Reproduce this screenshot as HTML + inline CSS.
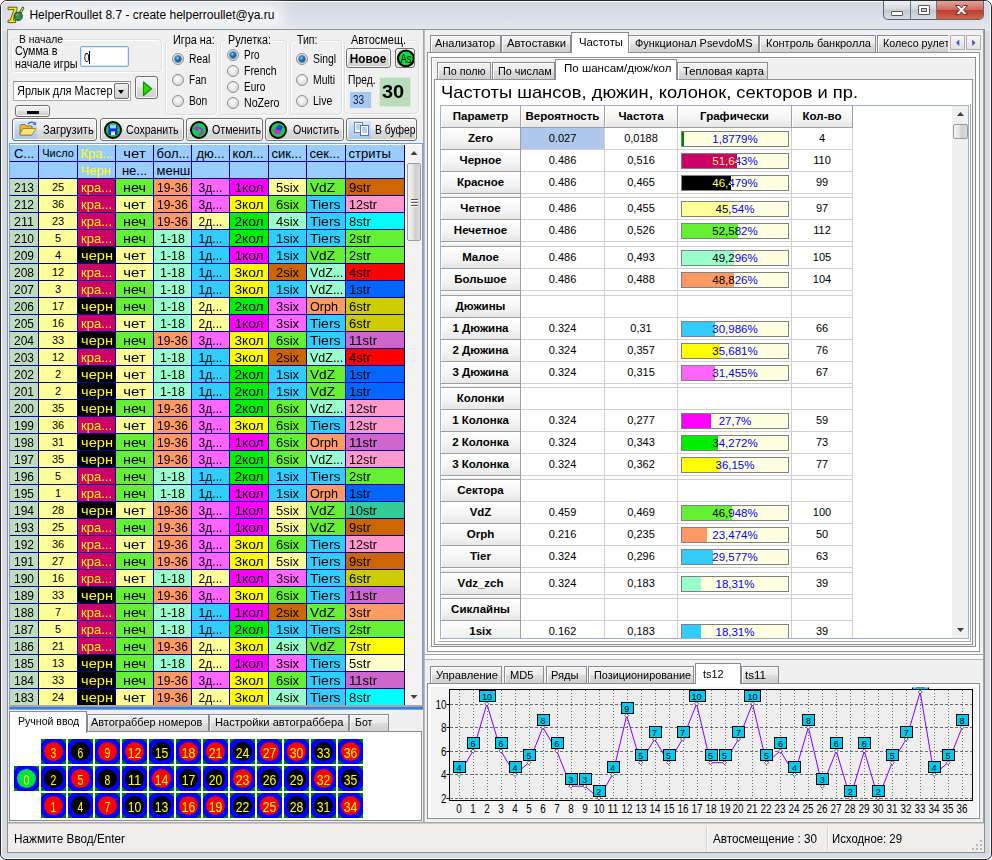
<!DOCTYPE html>
<html lang="ru"><head><meta charset="utf-8"><title>HelperRoullet 8.7</title>
<style>
html,body{margin:0;padding:0;background:#fff}
body{width:992px;height:860px;position:relative;overflow:hidden;font-family:"Liberation Sans",sans-serif;font-size:12px;color:#000}
div{position:absolute}
.t{position:absolute;white-space:nowrap;display:block}

#win{position:absolute;left:0;top:0;width:990px;height:858px;border:1px solid #2b2b2b;border-radius:7px 7px 6px 6px;
background:linear-gradient(#d4d9e3 0px,#d8dde6 14px,#e2e6ec 26px,#e9ecf1 29px,#d6dbe5 31px,#d5dae4 100%);}
#winhi{position:absolute;left:1px;top:1px;width:988px;height:856px;border:1px solid rgba(255,255,255,.85);border-radius:6px;}
#glow{position:absolute;left:14px;top:5px;width:270px;height:20px;background:#fff;opacity:.8;filter:blur(7px);border-radius:10px}
#client{position:absolute;left:8px;top:30px;width:976px;height:822px;background:#f0f0f0;box-shadow:0 0 0 1px #8b9097;}
#capbtns{position:absolute;left:883px;top:1px;width:101px;height:19px;border:1px solid #5d6670;border-top:none;border-radius:0 0 5px 5px;box-sizing:border-box;overflow:hidden;background:linear-gradient(#eef1f4,#d4d9df 45%,#c3c9d1 50%,#d9dde2);}
.cb{position:absolute;top:0;height:19px;border-right:1px solid #6d7680;box-sizing:border-box}
.cb i{position:absolute;border:1px solid #555;background:#fff;box-sizing:border-box;border-radius:1px}
.cb b{position:absolute;border:1px solid #555;background:#ccd;box-sizing:content-box}
.cb.close{border-right:none;background:linear-gradient(#e0a49a,#cf6a5c 45%,#c03c2c 50%,#cf6a52);}

.gb{border:1px solid #dce0e5;border-radius:4px;box-sizing:border-box;box-shadow:inset 1px 1px 0 #fff, 1px 1px 0 #fff}
.rad{position:absolute;width:12px;height:12px;border-radius:50%;border:1px solid #8e8f8f;box-sizing:border-box;background:radial-gradient(circle at 45% 40%,#fdfdfd 0,#e4e4e4 55%,#c9c9c9 100%)}
.rad i{position:absolute;left:2px;top:2px;width:6px;height:6px;border-radius:50%;background:radial-gradient(circle at 40% 35%,#8fd8f8 0,#1a6fb4 40%,#083a78 100%);box-shadow:0 0 0 0.7px #2a6aa8}
.btn{border:1px solid #707070;border-radius:3px;box-sizing:border-box;background:linear-gradient(#f2f2f2 0,#ebebeb 48%,#dddddd 52%,#cfcfcf 100%);box-shadow:inset 0 0 0 1px rgba(255,255,255,.8);overflow:hidden}
.edit{border:1px solid #7aaede;box-sizing:border-box;background:#fff;border-radius:2px;box-shadow:inset 0 0 0 1px #dbeaf8}
.combo{border:1px solid #abadb3;box-sizing:border-box;background:#fff;border-top-color:#8a8d94}
.cbtn{position:absolute;right:1px;top:1px;width:15.5px;height:16.5px;border:1px solid #707070;box-sizing:border-box;background:linear-gradient(#f2f2f2,#ddd 50%,#cfcfcf);border-radius:2px}
.cbtn i{position:absolute;left:3px;top:6px;border:3.5px solid transparent;border-top:4px solid #000;border-bottom:none}

#lgrid{position:absolute;background:#fff;overflow:hidden;box-shadow:0 0 0 1px #6f9fe6}
#lgrid .c{position:absolute;height:16px;overflow:hidden}
.vsb{position:absolute;background:#f3f3f3}
.thumb{position:absolute;border:1px solid #9a9a9a;border-radius:2px;box-sizing:border-box;background:linear-gradient(90deg,#f4f4f4,#e2e2e2 45%,#cfcfcf 55%,#dadada)}
.thumb i{position:absolute;left:3px;width:7px;height:1px;background:#555;box-shadow:0 1px 0 #fff}

.page{border:1px solid #898c95;box-sizing:border-box;background:#fff}
.tab{border:1px solid #898c95;border-bottom:none;box-sizing:border-box;background:linear-gradient(#f2f2f2 0,#ebebeb 50%,#dddddd 50%,#cfcfcf 100%);overflow:hidden;box-shadow:inset 1px 1px 0 #fcfcfc}
.tab.sel{background:#fff;box-shadow:none;z-index:2}
.nc{position:absolute;width:25px;height:25px;background:#008000;overflow:hidden}
.nc b{position:absolute;left:-2px;top:-2px;width:29px;height:29px;border-radius:50%;background:#0000ff}
.nc i{position:absolute;left:3px;top:3px;width:19px;height:19px;border-radius:50%}

.page2{border:1px solid #898c95;box-sizing:border-box;background:#fff}
.sbtn{border:1px solid #b0b0b0;box-sizing:border-box;background:linear-gradient(#f6f6f6,#e0e0e0);}
#rgrid{position:absolute;background:#fff;overflow:hidden;border:1px solid #9ab4d4;box-sizing:border-box}
#rgrid .d{position:absolute;box-sizing:border-box;border-right:1px solid #d0d0d0;border-bottom:1px solid #d0d0d0;background:#fff}
#rgrid .h{position:absolute;box-sizing:border-box;border-right:1px solid #a0a0a0;border-bottom:1px solid #a0a0a0;background:linear-gradient(#ffffff,#f4f4f4 60%,#e6e6e6);box-shadow:inset 1px 1px 0 #fff}
.bar{position:absolute;box-sizing:border-box;border:1px solid #808080;background:#ffffe1;overflow:hidden}
.bar .fill{position:absolute;left:0;top:0;height:14px;overflow:hidden}
.bt{left:0;top:1px;width:106px;text-align:center;font-size:11.5px;line-height:12px}
</style></head>
<body>
<div id="win"></div>
<div id="winhi"></div>
<div id="glow"></div>
<svg style="position:absolute;left:0px;top:0px" width="30" height="30" viewBox="0 0 30 30">
<path d="M8 7.2 H17 V9.6 L13.2 20.2 H15.6 V22.6 H8 V20.2 H10.2 L14 9.6 H8 Z" fill="#f2ea12" stroke="#5e5208" stroke-width="0.9" stroke-linejoin="round"/>
<circle cx="18.2" cy="16.3" r="4.1" fill="#2f9636" stroke="#1c2c50" stroke-width="0.9"/>
<path d="M14.6 17.6 A4 4 0 0 0 21.8 18.2 L20 19.8 L16.4 19.8 Z" fill="#2450a8"/>
<circle cx="17.2" cy="15" r="1.3" fill="#8a8aa0"/>
<path d="M19.4 12.4 L22.6 6.8 L24 8 L21.4 12.8 Z" fill="#f4ee10" stroke="#222" stroke-width="0.8" stroke-linejoin="round"/>
</svg>
<span class="t" style="left:29.4px;top:8.84px;font-size:12px;line-height:12px;transform:scaleX(1.000);transform-origin:0 0;color:#000;">HelperRoullet 8.7 - create helperroullet@ya.ru</span>
<div id="capbtns"><div class="cb" style="left:0;width:27px"><i style="left:7px;top:9.5px;width:12px;height:5px"></i></div><div class="cb" style="left:27px;width:26px"><i style="left:7px;top:4px;width:12px;height:10px"></i><b style="left:10px;top:7px;width:4px;height:2px"></b></div><div class="cb close" style="left:53px;width:48px"><svg width="48" height="19" style="position:absolute;left:0;top:0"><path d="M18.5 4.5 L22.3 4.5 L24.5 7 L26.7 4.5 L30.5 4.5 L26.5 8.9 L30.5 13.4 L26.7 13.4 L24.5 10.9 L22.3 13.4 L18.5 13.4 L22.5 8.9 Z" fill="#fff" stroke="#5a2222" stroke-width="0.9"/></svg></div></div>
<div id="client"></div>
<div class="gb" style="left:11px;top:39px;width:151px;height:32.5px;"></div>
<div style="left:17px;top:38px;width:48px;height:4px;background:#f0f0f0"></div>
<span class="t" style="left:18.75px;top:33.69px;font-size:11px;line-height:11px;transform:scaleX(0.941);transform-origin:0 0;">В начале</span>
<span class="t" style="left:14.5px;top:44.84px;font-size:12px;line-height:12px;transform:scaleX(0.896);transform-origin:0 0;">Сумма в</span>
<span class="t" style="left:14.5px;top:57.59px;font-size:12px;line-height:12px;transform:scaleX(0.901);transform-origin:0 0;">начале игры</span>
<div class="edit" style="left:80px;top:46px;width:49px;height:20.5px;"><span class="t" style="left:2.5px;top:5.09px;font-size:12px;line-height:12px;transform:scaleX(0.822);transform-origin:0 0;">0</span><i style="position:absolute;left:8px;top:4px;width:1px;height:13px;background:#000"></i></div>
<div class="combo" style="left:13px;top:80.5px;width:118px;height:20.5px;"><span class="t" style="left:3px;top:3.34px;font-size:12px;line-height:12px;transform:scaleX(0.914);transform-origin:0 0;">Ярлык для Мастер</span><div class="cbtn"><i></i></div></div>
<div class="btn" style="left:135px;top:76px;width:23px;height:23px;"><svg width="21" height="21" style="position:absolute;left:0;top:0"><path d="M7.5 5 L15.5 11.7 L7.5 18.5 Z" fill="#22e000" stroke="#1b8a00" stroke-width="1.2" stroke-linejoin="round"/></svg></div>
<div class="btn" style="left:15px;top:104.5px;width:35px;height:12.5px;"><i style="position:absolute;left:11px;top:5.5px;width:12px;height:3px;background:#000"></i></div>
<div class="gb" style="left:165px;top:40px;width:52px;height:75px;"></div>
<div style="left:170px;top:39px;width:46px;height:4px;background:#f0f0f0"></div>
<span class="t" style="left:172.5px;top:34.34px;font-size:12px;line-height:12px;transform:scaleX(0.901);transform-origin:0 0;">Игра на:</span>
<div class="rad" style="left:172px;top:53px"><i></i></div>
<span class="t" style="left:188.75px;top:53.09px;font-size:12px;line-height:12px;transform:scaleX(0.861);transform-origin:0 0;">Real</span>
<div class="rad" style="left:172px;top:74px"></div>
<span class="t" style="left:188.75px;top:74.09px;font-size:12px;line-height:12px;transform:scaleX(0.846);transform-origin:0 0;">Fan</span>
<div class="rad" style="left:172px;top:95px"></div>
<span class="t" style="left:188.75px;top:95.09px;font-size:12px;line-height:12px;transform:scaleX(0.854);transform-origin:0 0;">Bon</span>
<div class="gb" style="left:220px;top:40px;width:67px;height:75px;"></div>
<div style="left:225px;top:39px;width:48px;height:4px;background:#f0f0f0"></div>
<span class="t" style="left:227.5px;top:34.34px;font-size:12px;line-height:12px;transform:scaleX(0.895);transform-origin:0 0;">Рулетка:</span>
<div class="rad" style="left:227px;top:49px"><i></i></div>
<span class="t" style="left:243.75px;top:49.09px;font-size:12px;line-height:12px;transform:scaleX(0.829);transform-origin:0 0;">Pro</span>
<div class="rad" style="left:227px;top:65px"></div>
<span class="t" style="left:243.75px;top:65.09px;font-size:12px;line-height:12px;transform:scaleX(0.870);transform-origin:0 0;">French</span>
<div class="rad" style="left:227px;top:81px"></div>
<span class="t" style="left:243.75px;top:81.09px;font-size:12px;line-height:12px;transform:scaleX(0.838);transform-origin:0 0;">Euro</span>
<div class="rad" style="left:227px;top:97px"></div>
<span class="t" style="left:243.75px;top:97.09px;font-size:12px;line-height:12px;transform:scaleX(0.887);transform-origin:0 0;">NoZero</span>
<div class="gb" style="left:290px;top:40px;width:52px;height:75px;"></div>
<div style="left:295px;top:39px;width:25px;height:4px;background:#f0f0f0"></div>
<span class="t" style="left:297px;top:34.34px;font-size:12px;line-height:12px;transform:scaleX(0.878);transform-origin:0 0;">Тип:</span>
<div class="rad" style="left:296px;top:53px"><i></i></div>
<span class="t" style="left:312.5px;top:53.09px;font-size:12px;line-height:12px;transform:scaleX(0.862);transform-origin:0 0;">Singl</span>
<div class="rad" style="left:296px;top:74px"></div>
<span class="t" style="left:312.5px;top:74.09px;font-size:12px;line-height:12px;transform:scaleX(0.868);transform-origin:0 0;">Multi</span>
<div class="rad" style="left:296px;top:95px"></div>
<span class="t" style="left:312.5px;top:95.09px;font-size:12px;line-height:12px;transform:scaleX(0.874);transform-origin:0 0;">Live</span>
<div class="gb" style="left:344px;top:40px;width:75px;height:74px;"></div>
<div style="left:349px;top:39px;width:60px;height:4px;background:#f0f0f0"></div>
<span class="t" style="left:351.25px;top:34.34px;font-size:12px;line-height:12px;transform:scaleX(0.912);transform-origin:0 0;">Автосмещ.</span>
<div class="btn" style="left:346px;top:47.5px;width:44.5px;height:20px;"><span class="t" style="left:0px;width:42px;text-align:center;top:4.34px;font-size:12px;line-height:12px;transform:scaleX(0.981);transform-origin:50% 0;font-weight:bold">Новое</span></div>
<div class="btn" style="left:395px;top:47.5px;width:20px;height:20px;"><svg width="19" height="19" style="position:absolute;left:0;top:0"><circle cx="9.9" cy="9.4" r="7.9" fill="#00e040" stroke="#000" stroke-width="2.2"/><text x="9.9" y="13.7" font-size="12" text-anchor="middle" font-family="Liberation Sans, sans-serif" fill="#000" textLength="11" lengthAdjust="spacingAndGlyphs">As</text></svg></div>
<span class="t" style="left:347.5px;top:73.84px;font-size:12px;line-height:12px;transform:scaleX(0.858);transform-origin:0 0;">Пред.</span>
<div style="left:349px;top:91px;width:23px;height:18px;background:#a9c8f0;border:1px solid #e8eef8;box-sizing:border-box"><span class="t" style="left:2.5px;top:2.34px;font-size:12px;line-height:12px;transform:scaleX(0.842);transform-origin:0 0;color:#124">33</span></div>
<div style="left:379px;top:77px;width:32px;height:30px;background:#b9dcb9;border:1px solid #dfeadf;box-sizing:border-box"><span class="t" style="left:-3.5px;width:32px;text-align:center;top:4.42px;font-size:19px;line-height:19px;transform:scaleX(1.050);transform-origin:50% 0;font-weight:bold">30</span></div>
<div class="btn" style="left:12px;top:118px;width:85px;height:22.5px;"><i style="position:absolute;left:2px;top:1.5px;width:22px;height:18px;background:linear-gradient(#d8e6fa,#a9c6f0);"></i><svg width="22" height="17" style="position:absolute;left:5px;top:1px"><path d="M2 6 L2 15 L14 15 L14 6 L8 6 L7 4.5 L3 4.5 Z" fill="#e8b830" stroke="#8a6a10" stroke-width="0.8"/><path d="M1.5 15 L5 8.5 L18 8.5 L14 15 Z" fill="#ffe27a" stroke="#9a7a18" stroke-width="0.8"/><path d="M10 4 C12 1.5 15 1.5 17 4" fill="none" stroke="#3a6ac8" stroke-width="1.3"/><path d="M15 4.8 L18.2 5 L17.6 1.8 Z" fill="#3a6ac8"/></svg><span class="t" style="left:30px;top:4.59px;font-size:12px;line-height:12px;transform:scaleX(0.926);transform-origin:0 0;">Загрузить</span></div>
<div class="btn" style="left:99.5px;top:118px;width:84px;height:22.5px;"><svg width="20" height="20" style="position:absolute;left:2px;top:0.5px"><circle cx="10" cy="10" r="8" fill="#00d848" stroke="#000" stroke-width="2"/><rect x="5.5" y="5" width="9" height="10" fill="#1030e0"/><rect x="7" y="5" width="6" height="3.4" fill="#a8c8ff"/><rect x="8" y="11.5" width="4" height="3.5" fill="#e8f0ff"/></svg><span class="t" style="left:25.25px;top:4.59px;font-size:12px;line-height:12px;transform:scaleX(0.880);transform-origin:0 0;">Сохранить</span></div>
<div class="btn" style="left:185.5px;top:118px;width:77.5px;height:22.5px;"><svg width="20" height="20" style="position:absolute;left:2px;top:0.5px"><circle cx="10" cy="10" r="8" fill="#00d848" stroke="#000" stroke-width="2"/><path d="M8 8 L10.5 8 C14.5 8 14.5 14.5 9.5 14.8" fill="none" stroke="#b030d0" stroke-width="2.2"/><path d="M4.2 8.6 L9 4.8 L9 11.6 Z" fill="#b030d0"/></svg><span class="t" style="left:25.75px;top:4.59px;font-size:12px;line-height:12px;transform:scaleX(0.893);transform-origin:0 0;">Отменить</span></div>
<div class="btn" style="left:265px;top:118px;width:78.5px;height:22.5px;"><svg width="20" height="20" style="position:absolute;left:2px;top:0.5px"><circle cx="10" cy="10" r="8" fill="#00d848" stroke="#000" stroke-width="2"/><path d="M11.2 4.2 L14.8 6.8 L12.8 11.2 L7.2 8.8 Z" fill="#2040e0"/><path d="M5.2 10.2 L7.2 8.6 L12.8 11.2 L11 15.2 L9 13.6 L7.4 14.8 Z" fill="#f020c0"/></svg><span class="t" style="left:26.5px;top:4.59px;font-size:12px;line-height:12px;transform:scaleX(0.885);transform-origin:0 0;">Очистить</span></div>
<div class="btn" style="left:346px;top:118px;width:71px;height:22.5px;"><i style="position:absolute;left:2px;top:1.5px;width:22px;height:18px;background:linear-gradient(#d8e6fa,#a9c6f0);"></i><svg width="20" height="17" style="position:absolute;left:5px;top:1px"><rect x="2.5" y="2.5" width="8" height="10" fill="#fff" stroke="#5a7ab8" stroke-width="0.9"/><path d="M4 5 H9 M4 7 H9 M4 9 H9" stroke="#6a8ad0" stroke-width="0.8"/><rect x="8.5" y="5.5" width="8" height="10" fill="#fff" stroke="#4a6ab0" stroke-width="0.9"/><path d="M10 8 H15 M10 10 H15 M10 12 H15" stroke="#5a7ac8" stroke-width="0.8"/></svg><span class="t" style="left:27.5px;top:4.59px;font-size:12px;line-height:12px;transform:scaleX(0.861);transform-origin:0 0;">В буфер</span></div>
<div id="lgrid" style="left:10px;top:144px;width:412px;height:561px">
<div style="position:absolute;left:0;top:1px;width:395px;height:560px;background:#000099"></div>
<div class="c" style="left:0px;top:1px;width:28px;background:#99ccff"><span class="t" style="left:0px;width:28px;text-align:center;top:1.50px;font-size:13px;line-height:13px;color:#000">С...</span></div><div class="c" style="left:29px;top:1px;width:38px;background:#99ccff"><span class="t" style="left:0px;width:38px;text-align:center;top:2.69px;font-size:11px;line-height:11px;color:#000">Число</span></div><div class="c" style="left:68px;top:1px;width:37px;background:#99ccff"><span class="t" style="left:2.5px;top:1.50px;font-size:13px;line-height:13px;color:#ffff00">Кра...</span></div><div class="c" style="left:106px;top:1px;width:37px;background:#99ccff"><span class="t" style="left:0px;width:37px;text-align:center;top:1.50px;font-size:13px;line-height:13px;transform:scaleX(1.152);transform-origin:50% 0;color:#000">чет</span></div><div class="c" style="left:144px;top:1px;width:37px;background:#99ccff"><span class="t" style="left:2.5px;top:1.50px;font-size:13px;line-height:13px;color:#000">бол...</span></div><div class="c" style="left:182px;top:1px;width:37px;background:#99ccff"><span class="t" style="left:0px;width:37px;text-align:center;top:1.50px;font-size:13px;line-height:13px;color:#000">дю...</span></div><div class="c" style="left:220px;top:1px;width:38px;background:#99ccff"><span class="t" style="left:2.5px;top:1.50px;font-size:13px;line-height:13px;color:#000">кол...</span></div><div class="c" style="left:259px;top:1px;width:37px;background:#99ccff"><span class="t" style="left:2.5px;top:1.50px;font-size:13px;line-height:13px;color:#000">сик...</span></div><div class="c" style="left:297px;top:1px;width:38px;background:#99ccff"><span class="t" style="left:2.5px;top:1.50px;font-size:13px;line-height:13px;color:#000">сек...</span></div><div class="c" style="left:336px;top:1px;width:58px;background:#99ccff"><span class="t" style="left:2.5px;top:1.50px;font-size:13px;line-height:13px;color:#000">стриты</span></div>
<div class="c" style="left:0px;top:18px;width:28px;background:#99ccff"><span class="t" style="left:2.5px;top:1.50px;font-size:13px;line-height:13px;color:#000"></span></div><div class="c" style="left:29px;top:18px;width:38px;background:#99ccff"><span class="t" style="left:2.5px;top:1.50px;font-size:13px;line-height:13px;color:#000"></span></div><div class="c" style="left:68px;top:18px;width:37px;background:#99ccff"><span class="t" style="left:2.5px;top:1.50px;font-size:13px;line-height:13px;color:#ffff00">Черн</span></div><div class="c" style="left:106px;top:18px;width:37px;background:#99ccff"><span class="t" style="left:0px;width:37px;text-align:center;top:1.50px;font-size:13px;line-height:13px;color:#000">не...</span></div><div class="c" style="left:144px;top:18px;width:37px;background:#99ccff"><span class="t" style="left:2.5px;top:1.50px;font-size:13px;line-height:13px;color:#000">менш</span></div><div class="c" style="left:182px;top:18px;width:37px;background:#99ccff"><span class="t" style="left:2.5px;top:1.50px;font-size:13px;line-height:13px;color:#000"></span></div><div class="c" style="left:220px;top:18px;width:38px;background:#99ccff"><span class="t" style="left:2.5px;top:1.50px;font-size:13px;line-height:13px;color:#000"></span></div><div class="c" style="left:259px;top:18px;width:37px;background:#99ccff"><span class="t" style="left:2.5px;top:1.50px;font-size:13px;line-height:13px;color:#000"></span></div><div class="c" style="left:297px;top:18px;width:38px;background:#99ccff"><span class="t" style="left:2.5px;top:1.50px;font-size:13px;line-height:13px;color:#000"></span></div><div class="c" style="left:336px;top:18px;width:58px;background:#99ccff"><span class="t" style="left:2.5px;top:1.50px;font-size:13px;line-height:13px;color:#000"></span></div>
<div class="c" style="left:0px;top:35px;width:28px;background:#c0dcc0"><span class="t" style="left:0px;width:28px;text-align:center;top:1.50px;font-size:13px;line-height:13px;transform:scaleX(0.922);transform-origin:50% 0;color:#000">213</span></div><div class="c" style="left:29px;top:35px;width:38px;background:#ffff99"><span class="t" style="left:0px;width:38px;text-align:center;top:2.69px;font-size:11px;line-height:11px;color:#000">25</span></div><div class="c" style="left:68px;top:35px;width:37px;background:#cc0066"><span class="t" style="left:2.5px;top:1.50px;font-size:13px;line-height:13px;transform:scaleX(1.001);transform-origin:0 0;color:#ffff00">кра...</span></div><div class="c" style="left:106px;top:35px;width:37px;background:#66f033"><span class="t" style="left:0px;width:37px;text-align:center;top:1.50px;font-size:13px;line-height:13px;transform:scaleX(1.108);transform-origin:50% 0;color:#000">неч</span></div><div class="c" style="left:144px;top:35px;width:37px;background:#ff9966"><span class="t" style="left:0px;width:37px;text-align:center;top:1.50px;font-size:13px;line-height:13px;transform:scaleX(0.925);transform-origin:50% 0;color:#000">19-36</span></div><div class="c" style="left:182px;top:35px;width:37px;background:#ff66ff"><span class="t" style="left:0px;width:37px;text-align:center;top:1.50px;font-size:13px;line-height:13px;transform:scaleX(0.926);transform-origin:50% 0;color:#000">3д...</span></div><div class="c" style="left:220px;top:35px;width:38px;background:#ff00ff"><span class="t" style="left:0px;width:38px;text-align:center;top:1.50px;font-size:13px;line-height:13px;transform:scaleX(1.060);transform-origin:50% 0;color:#000">1кол</span></div><div class="c" style="left:259px;top:35px;width:37px;background:#ffff99"><span class="t" style="left:0px;width:37px;text-align:center;top:1.50px;font-size:13px;line-height:13px;transform:scaleX(0.995);transform-origin:50% 0;color:#000">5six</span></div><div class="c" style="left:297px;top:35px;width:38px;background:#66f033"><span class="t" style="left:2.5px;top:1.50px;font-size:13px;line-height:13px;transform:scaleX(1.048);transform-origin:0 0;color:#000">VdZ</span></div><div class="c" style="left:336px;top:35px;width:58px;background:#cc6600"><span class="t" style="left:2.5px;top:1.50px;font-size:13px;line-height:13px;transform:scaleX(1.004);transform-origin:0 0;color:#000">9str</span></div>
<div class="c" style="left:0px;top:52px;width:28px;background:#c0dcc0"><span class="t" style="left:0px;width:28px;text-align:center;top:1.50px;font-size:13px;line-height:13px;transform:scaleX(0.922);transform-origin:50% 0;color:#000">212</span></div><div class="c" style="left:29px;top:52px;width:38px;background:#ffff99"><span class="t" style="left:0px;width:38px;text-align:center;top:2.69px;font-size:11px;line-height:11px;color:#000">36</span></div><div class="c" style="left:68px;top:52px;width:37px;background:#cc0066"><span class="t" style="left:2.5px;top:1.50px;font-size:13px;line-height:13px;transform:scaleX(1.001);transform-origin:0 0;color:#ffff00">кра...</span></div><div class="c" style="left:106px;top:52px;width:37px;background:#ffff99"><span class="t" style="left:0px;width:37px;text-align:center;top:1.50px;font-size:13px;line-height:13px;transform:scaleX(1.152);transform-origin:50% 0;color:#000">чет</span></div><div class="c" style="left:144px;top:52px;width:37px;background:#ff9966"><span class="t" style="left:0px;width:37px;text-align:center;top:1.50px;font-size:13px;line-height:13px;transform:scaleX(0.925);transform-origin:50% 0;color:#000">19-36</span></div><div class="c" style="left:182px;top:52px;width:37px;background:#ff66ff"><span class="t" style="left:0px;width:37px;text-align:center;top:1.50px;font-size:13px;line-height:13px;transform:scaleX(0.926);transform-origin:50% 0;color:#000">3д...</span></div><div class="c" style="left:220px;top:52px;width:38px;background:#ffff00"><span class="t" style="left:0px;width:38px;text-align:center;top:1.50px;font-size:13px;line-height:13px;transform:scaleX(1.060);transform-origin:50% 0;color:#000">3кол</span></div><div class="c" style="left:259px;top:52px;width:37px;background:#66f033"><span class="t" style="left:0px;width:37px;text-align:center;top:1.50px;font-size:13px;line-height:13px;transform:scaleX(0.995);transform-origin:50% 0;color:#000">6six</span></div><div class="c" style="left:297px;top:52px;width:38px;background:#33ccff"><span class="t" style="left:2.5px;top:1.50px;font-size:13px;line-height:13px;transform:scaleX(1.074);transform-origin:0 0;color:#000">Tiers</span></div><div class="c" style="left:336px;top:52px;width:58px;background:#ff99cc"><span class="t" style="left:2.5px;top:1.50px;font-size:13px;line-height:13px;transform:scaleX(0.969);transform-origin:0 0;color:#000">12str</span></div>
<div class="c" style="left:0px;top:69px;width:28px;background:#c0dcc0"><span class="t" style="left:0px;width:28px;text-align:center;top:1.50px;font-size:13px;line-height:13px;transform:scaleX(0.965);transform-origin:50% 0;color:#000">211</span></div><div class="c" style="left:29px;top:69px;width:38px;background:#ffff99"><span class="t" style="left:0px;width:38px;text-align:center;top:2.69px;font-size:11px;line-height:11px;color:#000">23</span></div><div class="c" style="left:68px;top:69px;width:37px;background:#cc0066"><span class="t" style="left:2.5px;top:1.50px;font-size:13px;line-height:13px;transform:scaleX(1.001);transform-origin:0 0;color:#ffff00">кра...</span></div><div class="c" style="left:106px;top:69px;width:37px;background:#66f033"><span class="t" style="left:0px;width:37px;text-align:center;top:1.50px;font-size:13px;line-height:13px;transform:scaleX(1.108);transform-origin:50% 0;color:#000">неч</span></div><div class="c" style="left:144px;top:69px;width:37px;background:#ff9966"><span class="t" style="left:0px;width:37px;text-align:center;top:1.50px;font-size:13px;line-height:13px;transform:scaleX(0.925);transform-origin:50% 0;color:#000">19-36</span></div><div class="c" style="left:182px;top:69px;width:37px;background:#ffff99"><span class="t" style="left:0px;width:37px;text-align:center;top:1.50px;font-size:13px;line-height:13px;transform:scaleX(0.926);transform-origin:50% 0;color:#000">2д...</span></div><div class="c" style="left:220px;top:69px;width:38px;background:#00ee00"><span class="t" style="left:0px;width:38px;text-align:center;top:1.50px;font-size:13px;line-height:13px;transform:scaleX(1.060);transform-origin:50% 0;color:#000">2кол</span></div><div class="c" style="left:259px;top:69px;width:37px;background:#99ffcc"><span class="t" style="left:0px;width:37px;text-align:center;top:1.50px;font-size:13px;line-height:13px;transform:scaleX(0.995);transform-origin:50% 0;color:#000">4six</span></div><div class="c" style="left:297px;top:69px;width:38px;background:#33ccff"><span class="t" style="left:2.5px;top:1.50px;font-size:13px;line-height:13px;transform:scaleX(1.074);transform-origin:0 0;color:#000">Tiers</span></div><div class="c" style="left:336px;top:69px;width:58px;background:#00ffff"><span class="t" style="left:2.5px;top:1.50px;font-size:13px;line-height:13px;transform:scaleX(1.004);transform-origin:0 0;color:#000">8str</span></div>
<div class="c" style="left:0px;top:86px;width:28px;background:#c0dcc0"><span class="t" style="left:0px;width:28px;text-align:center;top:1.50px;font-size:13px;line-height:13px;transform:scaleX(0.922);transform-origin:50% 0;color:#000">210</span></div><div class="c" style="left:29px;top:86px;width:38px;background:#ffff99"><span class="t" style="left:0px;width:38px;text-align:center;top:2.69px;font-size:11px;line-height:11px;color:#000">5</span></div><div class="c" style="left:68px;top:86px;width:37px;background:#cc0066"><span class="t" style="left:2.5px;top:1.50px;font-size:13px;line-height:13px;transform:scaleX(1.001);transform-origin:0 0;color:#ffff00">кра...</span></div><div class="c" style="left:106px;top:86px;width:37px;background:#66f033"><span class="t" style="left:0px;width:37px;text-align:center;top:1.50px;font-size:13px;line-height:13px;transform:scaleX(1.108);transform-origin:50% 0;color:#000">неч</span></div><div class="c" style="left:144px;top:86px;width:37px;background:#99ffcc"><span class="t" style="left:0px;width:37px;text-align:center;top:1.50px;font-size:13px;line-height:13px;transform:scaleX(0.960);transform-origin:50% 0;color:#000">1-18</span></div><div class="c" style="left:182px;top:86px;width:37px;background:#33ccff"><span class="t" style="left:0px;width:37px;text-align:center;top:1.50px;font-size:13px;line-height:13px;transform:scaleX(0.926);transform-origin:50% 0;color:#000">1д...</span></div><div class="c" style="left:220px;top:86px;width:38px;background:#00ee00"><span class="t" style="left:0px;width:38px;text-align:center;top:1.50px;font-size:13px;line-height:13px;transform:scaleX(1.060);transform-origin:50% 0;color:#000">2кол</span></div><div class="c" style="left:259px;top:86px;width:37px;background:#33ccff"><span class="t" style="left:0px;width:37px;text-align:center;top:1.50px;font-size:13px;line-height:13px;transform:scaleX(0.995);transform-origin:50% 0;color:#000">1six</span></div><div class="c" style="left:297px;top:86px;width:38px;background:#33ccff"><span class="t" style="left:2.5px;top:1.50px;font-size:13px;line-height:13px;transform:scaleX(1.074);transform-origin:0 0;color:#000">Tiers</span></div><div class="c" style="left:336px;top:86px;width:58px;background:#66f033"><span class="t" style="left:2.5px;top:1.50px;font-size:13px;line-height:13px;transform:scaleX(1.004);transform-origin:0 0;color:#000">2str</span></div>
<div class="c" style="left:0px;top:103px;width:28px;background:#c0dcc0"><span class="t" style="left:0px;width:28px;text-align:center;top:1.50px;font-size:13px;line-height:13px;transform:scaleX(0.922);transform-origin:50% 0;color:#000">209</span></div><div class="c" style="left:29px;top:103px;width:38px;background:#ffff99"><span class="t" style="left:0px;width:38px;text-align:center;top:2.69px;font-size:11px;line-height:11px;color:#000">4</span></div><div class="c" style="left:68px;top:103px;width:37px;background:#000"><span class="t" style="left:2.5px;top:1.50px;font-size:13px;line-height:13px;transform:scaleX(1.126);transform-origin:0 0;color:#ffff00">черн</span></div><div class="c" style="left:106px;top:103px;width:37px;background:#ffff99"><span class="t" style="left:0px;width:37px;text-align:center;top:1.50px;font-size:13px;line-height:13px;transform:scaleX(1.152);transform-origin:50% 0;color:#000">чет</span></div><div class="c" style="left:144px;top:103px;width:37px;background:#99ffcc"><span class="t" style="left:0px;width:37px;text-align:center;top:1.50px;font-size:13px;line-height:13px;transform:scaleX(0.960);transform-origin:50% 0;color:#000">1-18</span></div><div class="c" style="left:182px;top:103px;width:37px;background:#33ccff"><span class="t" style="left:0px;width:37px;text-align:center;top:1.50px;font-size:13px;line-height:13px;transform:scaleX(0.926);transform-origin:50% 0;color:#000">1д...</span></div><div class="c" style="left:220px;top:103px;width:38px;background:#ff00ff"><span class="t" style="left:0px;width:38px;text-align:center;top:1.50px;font-size:13px;line-height:13px;transform:scaleX(1.060);transform-origin:50% 0;color:#000">1кол</span></div><div class="c" style="left:259px;top:103px;width:37px;background:#33ccff"><span class="t" style="left:0px;width:37px;text-align:center;top:1.50px;font-size:13px;line-height:13px;transform:scaleX(0.995);transform-origin:50% 0;color:#000">1six</span></div><div class="c" style="left:297px;top:103px;width:38px;background:#66f033"><span class="t" style="left:2.5px;top:1.50px;font-size:13px;line-height:13px;transform:scaleX(1.048);transform-origin:0 0;color:#000">VdZ</span></div><div class="c" style="left:336px;top:103px;width:58px;background:#66f033"><span class="t" style="left:2.5px;top:1.50px;font-size:13px;line-height:13px;transform:scaleX(1.004);transform-origin:0 0;color:#000">2str</span></div>
<div class="c" style="left:0px;top:120px;width:28px;background:#c0dcc0"><span class="t" style="left:0px;width:28px;text-align:center;top:1.50px;font-size:13px;line-height:13px;transform:scaleX(0.922);transform-origin:50% 0;color:#000">208</span></div><div class="c" style="left:29px;top:120px;width:38px;background:#ffff99"><span class="t" style="left:0px;width:38px;text-align:center;top:2.69px;font-size:11px;line-height:11px;color:#000">12</span></div><div class="c" style="left:68px;top:120px;width:37px;background:#cc0066"><span class="t" style="left:2.5px;top:1.50px;font-size:13px;line-height:13px;transform:scaleX(1.001);transform-origin:0 0;color:#ffff00">кра...</span></div><div class="c" style="left:106px;top:120px;width:37px;background:#ffff99"><span class="t" style="left:0px;width:37px;text-align:center;top:1.50px;font-size:13px;line-height:13px;transform:scaleX(1.152);transform-origin:50% 0;color:#000">чет</span></div><div class="c" style="left:144px;top:120px;width:37px;background:#99ffcc"><span class="t" style="left:0px;width:37px;text-align:center;top:1.50px;font-size:13px;line-height:13px;transform:scaleX(0.960);transform-origin:50% 0;color:#000">1-18</span></div><div class="c" style="left:182px;top:120px;width:37px;background:#33ccff"><span class="t" style="left:0px;width:37px;text-align:center;top:1.50px;font-size:13px;line-height:13px;transform:scaleX(0.926);transform-origin:50% 0;color:#000">1д...</span></div><div class="c" style="left:220px;top:120px;width:38px;background:#ffff00"><span class="t" style="left:0px;width:38px;text-align:center;top:1.50px;font-size:13px;line-height:13px;transform:scaleX(1.060);transform-origin:50% 0;color:#000">3кол</span></div><div class="c" style="left:259px;top:120px;width:37px;background:#cc6600"><span class="t" style="left:0px;width:37px;text-align:center;top:1.50px;font-size:13px;line-height:13px;transform:scaleX(0.995);transform-origin:50% 0;color:#000">2six</span></div><div class="c" style="left:297px;top:120px;width:38px;background:#99ffcc"><span class="t" style="left:2.5px;top:1.50px;font-size:13px;line-height:13px;transform:scaleX(0.960);transform-origin:0 0;color:#000">VdZ...</span></div><div class="c" style="left:336px;top:120px;width:58px;background:#ff0000"><span class="t" style="left:2.5px;top:1.50px;font-size:13px;line-height:13px;transform:scaleX(1.004);transform-origin:0 0;color:#000">4str</span></div>
<div class="c" style="left:0px;top:137px;width:28px;background:#c0dcc0"><span class="t" style="left:0px;width:28px;text-align:center;top:1.50px;font-size:13px;line-height:13px;transform:scaleX(0.922);transform-origin:50% 0;color:#000">207</span></div><div class="c" style="left:29px;top:137px;width:38px;background:#ffff99"><span class="t" style="left:0px;width:38px;text-align:center;top:2.69px;font-size:11px;line-height:11px;color:#000">3</span></div><div class="c" style="left:68px;top:137px;width:37px;background:#cc0066"><span class="t" style="left:2.5px;top:1.50px;font-size:13px;line-height:13px;transform:scaleX(1.001);transform-origin:0 0;color:#ffff00">кра...</span></div><div class="c" style="left:106px;top:137px;width:37px;background:#66f033"><span class="t" style="left:0px;width:37px;text-align:center;top:1.50px;font-size:13px;line-height:13px;transform:scaleX(1.108);transform-origin:50% 0;color:#000">неч</span></div><div class="c" style="left:144px;top:137px;width:37px;background:#99ffcc"><span class="t" style="left:0px;width:37px;text-align:center;top:1.50px;font-size:13px;line-height:13px;transform:scaleX(0.960);transform-origin:50% 0;color:#000">1-18</span></div><div class="c" style="left:182px;top:137px;width:37px;background:#33ccff"><span class="t" style="left:0px;width:37px;text-align:center;top:1.50px;font-size:13px;line-height:13px;transform:scaleX(0.926);transform-origin:50% 0;color:#000">1д...</span></div><div class="c" style="left:220px;top:137px;width:38px;background:#ffff00"><span class="t" style="left:0px;width:38px;text-align:center;top:1.50px;font-size:13px;line-height:13px;transform:scaleX(1.060);transform-origin:50% 0;color:#000">3кол</span></div><div class="c" style="left:259px;top:137px;width:37px;background:#33ccff"><span class="t" style="left:0px;width:37px;text-align:center;top:1.50px;font-size:13px;line-height:13px;transform:scaleX(0.995);transform-origin:50% 0;color:#000">1six</span></div><div class="c" style="left:297px;top:137px;width:38px;background:#99ffcc"><span class="t" style="left:2.5px;top:1.50px;font-size:13px;line-height:13px;transform:scaleX(0.960);transform-origin:0 0;color:#000">VdZ...</span></div><div class="c" style="left:336px;top:137px;width:58px;background:#0066ff"><span class="t" style="left:2.5px;top:1.50px;font-size:13px;line-height:13px;transform:scaleX(1.004);transform-origin:0 0;color:#000">1str</span></div>
<div class="c" style="left:0px;top:154px;width:28px;background:#c0dcc0"><span class="t" style="left:0px;width:28px;text-align:center;top:1.50px;font-size:13px;line-height:13px;transform:scaleX(0.922);transform-origin:50% 0;color:#000">206</span></div><div class="c" style="left:29px;top:154px;width:38px;background:#ffff99"><span class="t" style="left:0px;width:38px;text-align:center;top:2.69px;font-size:11px;line-height:11px;color:#000">17</span></div><div class="c" style="left:68px;top:154px;width:37px;background:#000"><span class="t" style="left:2.5px;top:1.50px;font-size:13px;line-height:13px;transform:scaleX(1.126);transform-origin:0 0;color:#ffff00">черн</span></div><div class="c" style="left:106px;top:154px;width:37px;background:#66f033"><span class="t" style="left:0px;width:37px;text-align:center;top:1.50px;font-size:13px;line-height:13px;transform:scaleX(1.108);transform-origin:50% 0;color:#000">неч</span></div><div class="c" style="left:144px;top:154px;width:37px;background:#99ffcc"><span class="t" style="left:0px;width:37px;text-align:center;top:1.50px;font-size:13px;line-height:13px;transform:scaleX(0.960);transform-origin:50% 0;color:#000">1-18</span></div><div class="c" style="left:182px;top:154px;width:37px;background:#ffff99"><span class="t" style="left:0px;width:37px;text-align:center;top:1.50px;font-size:13px;line-height:13px;transform:scaleX(0.926);transform-origin:50% 0;color:#000">2д...</span></div><div class="c" style="left:220px;top:154px;width:38px;background:#00ee00"><span class="t" style="left:0px;width:38px;text-align:center;top:1.50px;font-size:13px;line-height:13px;transform:scaleX(1.060);transform-origin:50% 0;color:#000">2кол</span></div><div class="c" style="left:259px;top:154px;width:37px;background:#ff66ff"><span class="t" style="left:0px;width:37px;text-align:center;top:1.50px;font-size:13px;line-height:13px;transform:scaleX(0.995);transform-origin:50% 0;color:#000">3six</span></div><div class="c" style="left:297px;top:154px;width:38px;background:#ff9966"><span class="t" style="left:2.5px;top:1.50px;font-size:13px;line-height:13px;transform:scaleX(0.969);transform-origin:0 0;color:#000">Orph</span></div><div class="c" style="left:336px;top:154px;width:58px;background:#cccc00"><span class="t" style="left:2.5px;top:1.50px;font-size:13px;line-height:13px;transform:scaleX(1.004);transform-origin:0 0;color:#000">6str</span></div>
<div class="c" style="left:0px;top:171px;width:28px;background:#c0dcc0"><span class="t" style="left:0px;width:28px;text-align:center;top:1.50px;font-size:13px;line-height:13px;transform:scaleX(0.922);transform-origin:50% 0;color:#000">205</span></div><div class="c" style="left:29px;top:171px;width:38px;background:#ffff99"><span class="t" style="left:0px;width:38px;text-align:center;top:2.69px;font-size:11px;line-height:11px;color:#000">16</span></div><div class="c" style="left:68px;top:171px;width:37px;background:#cc0066"><span class="t" style="left:2.5px;top:1.50px;font-size:13px;line-height:13px;transform:scaleX(1.001);transform-origin:0 0;color:#ffff00">кра...</span></div><div class="c" style="left:106px;top:171px;width:37px;background:#ffff99"><span class="t" style="left:0px;width:37px;text-align:center;top:1.50px;font-size:13px;line-height:13px;transform:scaleX(1.152);transform-origin:50% 0;color:#000">чет</span></div><div class="c" style="left:144px;top:171px;width:37px;background:#99ffcc"><span class="t" style="left:0px;width:37px;text-align:center;top:1.50px;font-size:13px;line-height:13px;transform:scaleX(0.960);transform-origin:50% 0;color:#000">1-18</span></div><div class="c" style="left:182px;top:171px;width:37px;background:#ffff99"><span class="t" style="left:0px;width:37px;text-align:center;top:1.50px;font-size:13px;line-height:13px;transform:scaleX(0.926);transform-origin:50% 0;color:#000">2д...</span></div><div class="c" style="left:220px;top:171px;width:38px;background:#ff00ff"><span class="t" style="left:0px;width:38px;text-align:center;top:1.50px;font-size:13px;line-height:13px;transform:scaleX(1.060);transform-origin:50% 0;color:#000">1кол</span></div><div class="c" style="left:259px;top:171px;width:37px;background:#ff66ff"><span class="t" style="left:0px;width:37px;text-align:center;top:1.50px;font-size:13px;line-height:13px;transform:scaleX(0.995);transform-origin:50% 0;color:#000">3six</span></div><div class="c" style="left:297px;top:171px;width:38px;background:#33ccff"><span class="t" style="left:2.5px;top:1.50px;font-size:13px;line-height:13px;transform:scaleX(1.074);transform-origin:0 0;color:#000">Tiers</span></div><div class="c" style="left:336px;top:171px;width:58px;background:#cccc00"><span class="t" style="left:2.5px;top:1.50px;font-size:13px;line-height:13px;transform:scaleX(1.004);transform-origin:0 0;color:#000">6str</span></div>
<div class="c" style="left:0px;top:188px;width:28px;background:#c0dcc0"><span class="t" style="left:0px;width:28px;text-align:center;top:1.50px;font-size:13px;line-height:13px;transform:scaleX(0.922);transform-origin:50% 0;color:#000">204</span></div><div class="c" style="left:29px;top:188px;width:38px;background:#ffff99"><span class="t" style="left:0px;width:38px;text-align:center;top:2.69px;font-size:11px;line-height:11px;color:#000">33</span></div><div class="c" style="left:68px;top:188px;width:37px;background:#000"><span class="t" style="left:2.5px;top:1.50px;font-size:13px;line-height:13px;transform:scaleX(1.126);transform-origin:0 0;color:#ffff00">черн</span></div><div class="c" style="left:106px;top:188px;width:37px;background:#66f033"><span class="t" style="left:0px;width:37px;text-align:center;top:1.50px;font-size:13px;line-height:13px;transform:scaleX(1.108);transform-origin:50% 0;color:#000">неч</span></div><div class="c" style="left:144px;top:188px;width:37px;background:#ff9966"><span class="t" style="left:0px;width:37px;text-align:center;top:1.50px;font-size:13px;line-height:13px;transform:scaleX(0.925);transform-origin:50% 0;color:#000">19-36</span></div><div class="c" style="left:182px;top:188px;width:37px;background:#ff66ff"><span class="t" style="left:0px;width:37px;text-align:center;top:1.50px;font-size:13px;line-height:13px;transform:scaleX(0.926);transform-origin:50% 0;color:#000">3д...</span></div><div class="c" style="left:220px;top:188px;width:38px;background:#ffff00"><span class="t" style="left:0px;width:38px;text-align:center;top:1.50px;font-size:13px;line-height:13px;transform:scaleX(1.060);transform-origin:50% 0;color:#000">3кол</span></div><div class="c" style="left:259px;top:188px;width:37px;background:#66f033"><span class="t" style="left:0px;width:37px;text-align:center;top:1.50px;font-size:13px;line-height:13px;transform:scaleX(0.995);transform-origin:50% 0;color:#000">6six</span></div><div class="c" style="left:297px;top:188px;width:38px;background:#33ccff"><span class="t" style="left:2.5px;top:1.50px;font-size:13px;line-height:13px;transform:scaleX(1.074);transform-origin:0 0;color:#000">Tiers</span></div><div class="c" style="left:336px;top:188px;width:58px;background:#cc66cc"><span class="t" style="left:2.5px;top:1.50px;font-size:13px;line-height:13px;transform:scaleX(1.002);transform-origin:0 0;color:#000">11str</span></div>
<div class="c" style="left:0px;top:205px;width:28px;background:#c0dcc0"><span class="t" style="left:0px;width:28px;text-align:center;top:1.50px;font-size:13px;line-height:13px;transform:scaleX(0.922);transform-origin:50% 0;color:#000">203</span></div><div class="c" style="left:29px;top:205px;width:38px;background:#ffff99"><span class="t" style="left:0px;width:38px;text-align:center;top:2.69px;font-size:11px;line-height:11px;color:#000">12</span></div><div class="c" style="left:68px;top:205px;width:37px;background:#cc0066"><span class="t" style="left:2.5px;top:1.50px;font-size:13px;line-height:13px;transform:scaleX(1.001);transform-origin:0 0;color:#ffff00">кра...</span></div><div class="c" style="left:106px;top:205px;width:37px;background:#ffff99"><span class="t" style="left:0px;width:37px;text-align:center;top:1.50px;font-size:13px;line-height:13px;transform:scaleX(1.152);transform-origin:50% 0;color:#000">чет</span></div><div class="c" style="left:144px;top:205px;width:37px;background:#99ffcc"><span class="t" style="left:0px;width:37px;text-align:center;top:1.50px;font-size:13px;line-height:13px;transform:scaleX(0.960);transform-origin:50% 0;color:#000">1-18</span></div><div class="c" style="left:182px;top:205px;width:37px;background:#33ccff"><span class="t" style="left:0px;width:37px;text-align:center;top:1.50px;font-size:13px;line-height:13px;transform:scaleX(0.926);transform-origin:50% 0;color:#000">1д...</span></div><div class="c" style="left:220px;top:205px;width:38px;background:#ffff00"><span class="t" style="left:0px;width:38px;text-align:center;top:1.50px;font-size:13px;line-height:13px;transform:scaleX(1.060);transform-origin:50% 0;color:#000">3кол</span></div><div class="c" style="left:259px;top:205px;width:37px;background:#cc6600"><span class="t" style="left:0px;width:37px;text-align:center;top:1.50px;font-size:13px;line-height:13px;transform:scaleX(0.995);transform-origin:50% 0;color:#000">2six</span></div><div class="c" style="left:297px;top:205px;width:38px;background:#99ffcc"><span class="t" style="left:2.5px;top:1.50px;font-size:13px;line-height:13px;transform:scaleX(0.960);transform-origin:0 0;color:#000">VdZ...</span></div><div class="c" style="left:336px;top:205px;width:58px;background:#ff0000"><span class="t" style="left:2.5px;top:1.50px;font-size:13px;line-height:13px;transform:scaleX(1.004);transform-origin:0 0;color:#000">4str</span></div>
<div class="c" style="left:0px;top:222px;width:28px;background:#c0dcc0"><span class="t" style="left:0px;width:28px;text-align:center;top:1.50px;font-size:13px;line-height:13px;transform:scaleX(0.922);transform-origin:50% 0;color:#000">202</span></div><div class="c" style="left:29px;top:222px;width:38px;background:#ffff99"><span class="t" style="left:0px;width:38px;text-align:center;top:2.69px;font-size:11px;line-height:11px;color:#000">2</span></div><div class="c" style="left:68px;top:222px;width:37px;background:#000"><span class="t" style="left:2.5px;top:1.50px;font-size:13px;line-height:13px;transform:scaleX(1.126);transform-origin:0 0;color:#ffff00">черн</span></div><div class="c" style="left:106px;top:222px;width:37px;background:#ffff99"><span class="t" style="left:0px;width:37px;text-align:center;top:1.50px;font-size:13px;line-height:13px;transform:scaleX(1.152);transform-origin:50% 0;color:#000">чет</span></div><div class="c" style="left:144px;top:222px;width:37px;background:#99ffcc"><span class="t" style="left:0px;width:37px;text-align:center;top:1.50px;font-size:13px;line-height:13px;transform:scaleX(0.960);transform-origin:50% 0;color:#000">1-18</span></div><div class="c" style="left:182px;top:222px;width:37px;background:#33ccff"><span class="t" style="left:0px;width:37px;text-align:center;top:1.50px;font-size:13px;line-height:13px;transform:scaleX(0.926);transform-origin:50% 0;color:#000">1д...</span></div><div class="c" style="left:220px;top:222px;width:38px;background:#00ee00"><span class="t" style="left:0px;width:38px;text-align:center;top:1.50px;font-size:13px;line-height:13px;transform:scaleX(1.060);transform-origin:50% 0;color:#000">2кол</span></div><div class="c" style="left:259px;top:222px;width:37px;background:#33ccff"><span class="t" style="left:0px;width:37px;text-align:center;top:1.50px;font-size:13px;line-height:13px;transform:scaleX(0.995);transform-origin:50% 0;color:#000">1six</span></div><div class="c" style="left:297px;top:222px;width:38px;background:#66f033"><span class="t" style="left:2.5px;top:1.50px;font-size:13px;line-height:13px;transform:scaleX(1.048);transform-origin:0 0;color:#000">VdZ</span></div><div class="c" style="left:336px;top:222px;width:58px;background:#0066ff"><span class="t" style="left:2.5px;top:1.50px;font-size:13px;line-height:13px;transform:scaleX(1.004);transform-origin:0 0;color:#000">1str</span></div>
<div class="c" style="left:0px;top:239px;width:28px;background:#c0dcc0"><span class="t" style="left:0px;width:28px;text-align:center;top:1.50px;font-size:13px;line-height:13px;transform:scaleX(0.922);transform-origin:50% 0;color:#000">201</span></div><div class="c" style="left:29px;top:239px;width:38px;background:#ffff99"><span class="t" style="left:0px;width:38px;text-align:center;top:2.69px;font-size:11px;line-height:11px;color:#000">2</span></div><div class="c" style="left:68px;top:239px;width:37px;background:#000"><span class="t" style="left:2.5px;top:1.50px;font-size:13px;line-height:13px;transform:scaleX(1.126);transform-origin:0 0;color:#ffff00">черн</span></div><div class="c" style="left:106px;top:239px;width:37px;background:#ffff99"><span class="t" style="left:0px;width:37px;text-align:center;top:1.50px;font-size:13px;line-height:13px;transform:scaleX(1.152);transform-origin:50% 0;color:#000">чет</span></div><div class="c" style="left:144px;top:239px;width:37px;background:#99ffcc"><span class="t" style="left:0px;width:37px;text-align:center;top:1.50px;font-size:13px;line-height:13px;transform:scaleX(0.960);transform-origin:50% 0;color:#000">1-18</span></div><div class="c" style="left:182px;top:239px;width:37px;background:#33ccff"><span class="t" style="left:0px;width:37px;text-align:center;top:1.50px;font-size:13px;line-height:13px;transform:scaleX(0.926);transform-origin:50% 0;color:#000">1д...</span></div><div class="c" style="left:220px;top:239px;width:38px;background:#00ee00"><span class="t" style="left:0px;width:38px;text-align:center;top:1.50px;font-size:13px;line-height:13px;transform:scaleX(1.060);transform-origin:50% 0;color:#000">2кол</span></div><div class="c" style="left:259px;top:239px;width:37px;background:#33ccff"><span class="t" style="left:0px;width:37px;text-align:center;top:1.50px;font-size:13px;line-height:13px;transform:scaleX(0.995);transform-origin:50% 0;color:#000">1six</span></div><div class="c" style="left:297px;top:239px;width:38px;background:#66f033"><span class="t" style="left:2.5px;top:1.50px;font-size:13px;line-height:13px;transform:scaleX(1.048);transform-origin:0 0;color:#000">VdZ</span></div><div class="c" style="left:336px;top:239px;width:58px;background:#0066ff"><span class="t" style="left:2.5px;top:1.50px;font-size:13px;line-height:13px;transform:scaleX(1.004);transform-origin:0 0;color:#000">1str</span></div>
<div class="c" style="left:0px;top:256px;width:28px;background:#c0dcc0"><span class="t" style="left:0px;width:28px;text-align:center;top:1.50px;font-size:13px;line-height:13px;transform:scaleX(0.922);transform-origin:50% 0;color:#000">200</span></div><div class="c" style="left:29px;top:256px;width:38px;background:#ffff99"><span class="t" style="left:0px;width:38px;text-align:center;top:2.69px;font-size:11px;line-height:11px;color:#000">35</span></div><div class="c" style="left:68px;top:256px;width:37px;background:#000"><span class="t" style="left:2.5px;top:1.50px;font-size:13px;line-height:13px;transform:scaleX(1.126);transform-origin:0 0;color:#ffff00">черн</span></div><div class="c" style="left:106px;top:256px;width:37px;background:#66f033"><span class="t" style="left:0px;width:37px;text-align:center;top:1.50px;font-size:13px;line-height:13px;transform:scaleX(1.108);transform-origin:50% 0;color:#000">неч</span></div><div class="c" style="left:144px;top:256px;width:37px;background:#ff9966"><span class="t" style="left:0px;width:37px;text-align:center;top:1.50px;font-size:13px;line-height:13px;transform:scaleX(0.925);transform-origin:50% 0;color:#000">19-36</span></div><div class="c" style="left:182px;top:256px;width:37px;background:#ff66ff"><span class="t" style="left:0px;width:37px;text-align:center;top:1.50px;font-size:13px;line-height:13px;transform:scaleX(0.926);transform-origin:50% 0;color:#000">3д...</span></div><div class="c" style="left:220px;top:256px;width:38px;background:#00ee00"><span class="t" style="left:0px;width:38px;text-align:center;top:1.50px;font-size:13px;line-height:13px;transform:scaleX(1.060);transform-origin:50% 0;color:#000">2кол</span></div><div class="c" style="left:259px;top:256px;width:37px;background:#66f033"><span class="t" style="left:0px;width:37px;text-align:center;top:1.50px;font-size:13px;line-height:13px;transform:scaleX(0.995);transform-origin:50% 0;color:#000">6six</span></div><div class="c" style="left:297px;top:256px;width:38px;background:#99ffcc"><span class="t" style="left:2.5px;top:1.50px;font-size:13px;line-height:13px;transform:scaleX(0.960);transform-origin:0 0;color:#000">VdZ...</span></div><div class="c" style="left:336px;top:256px;width:58px;background:#ff99cc"><span class="t" style="left:2.5px;top:1.50px;font-size:13px;line-height:13px;transform:scaleX(0.969);transform-origin:0 0;color:#000">12str</span></div>
<div class="c" style="left:0px;top:273px;width:28px;background:#c0dcc0"><span class="t" style="left:0px;width:28px;text-align:center;top:1.50px;font-size:13px;line-height:13px;transform:scaleX(0.922);transform-origin:50% 0;color:#000">199</span></div><div class="c" style="left:29px;top:273px;width:38px;background:#ffff99"><span class="t" style="left:0px;width:38px;text-align:center;top:2.69px;font-size:11px;line-height:11px;color:#000">36</span></div><div class="c" style="left:68px;top:273px;width:37px;background:#cc0066"><span class="t" style="left:2.5px;top:1.50px;font-size:13px;line-height:13px;transform:scaleX(1.001);transform-origin:0 0;color:#ffff00">кра...</span></div><div class="c" style="left:106px;top:273px;width:37px;background:#ffff99"><span class="t" style="left:0px;width:37px;text-align:center;top:1.50px;font-size:13px;line-height:13px;transform:scaleX(1.152);transform-origin:50% 0;color:#000">чет</span></div><div class="c" style="left:144px;top:273px;width:37px;background:#ff9966"><span class="t" style="left:0px;width:37px;text-align:center;top:1.50px;font-size:13px;line-height:13px;transform:scaleX(0.925);transform-origin:50% 0;color:#000">19-36</span></div><div class="c" style="left:182px;top:273px;width:37px;background:#ff66ff"><span class="t" style="left:0px;width:37px;text-align:center;top:1.50px;font-size:13px;line-height:13px;transform:scaleX(0.926);transform-origin:50% 0;color:#000">3д...</span></div><div class="c" style="left:220px;top:273px;width:38px;background:#ffff00"><span class="t" style="left:0px;width:38px;text-align:center;top:1.50px;font-size:13px;line-height:13px;transform:scaleX(1.060);transform-origin:50% 0;color:#000">3кол</span></div><div class="c" style="left:259px;top:273px;width:37px;background:#66f033"><span class="t" style="left:0px;width:37px;text-align:center;top:1.50px;font-size:13px;line-height:13px;transform:scaleX(0.995);transform-origin:50% 0;color:#000">6six</span></div><div class="c" style="left:297px;top:273px;width:38px;background:#33ccff"><span class="t" style="left:2.5px;top:1.50px;font-size:13px;line-height:13px;transform:scaleX(1.074);transform-origin:0 0;color:#000">Tiers</span></div><div class="c" style="left:336px;top:273px;width:58px;background:#ff99cc"><span class="t" style="left:2.5px;top:1.50px;font-size:13px;line-height:13px;transform:scaleX(0.969);transform-origin:0 0;color:#000">12str</span></div>
<div class="c" style="left:0px;top:290px;width:28px;background:#c0dcc0"><span class="t" style="left:0px;width:28px;text-align:center;top:1.50px;font-size:13px;line-height:13px;transform:scaleX(0.922);transform-origin:50% 0;color:#000">198</span></div><div class="c" style="left:29px;top:290px;width:38px;background:#ffff99"><span class="t" style="left:0px;width:38px;text-align:center;top:2.69px;font-size:11px;line-height:11px;color:#000">31</span></div><div class="c" style="left:68px;top:290px;width:37px;background:#000"><span class="t" style="left:2.5px;top:1.50px;font-size:13px;line-height:13px;transform:scaleX(1.126);transform-origin:0 0;color:#ffff00">черн</span></div><div class="c" style="left:106px;top:290px;width:37px;background:#66f033"><span class="t" style="left:0px;width:37px;text-align:center;top:1.50px;font-size:13px;line-height:13px;transform:scaleX(1.108);transform-origin:50% 0;color:#000">неч</span></div><div class="c" style="left:144px;top:290px;width:37px;background:#ff9966"><span class="t" style="left:0px;width:37px;text-align:center;top:1.50px;font-size:13px;line-height:13px;transform:scaleX(0.925);transform-origin:50% 0;color:#000">19-36</span></div><div class="c" style="left:182px;top:290px;width:37px;background:#ff66ff"><span class="t" style="left:0px;width:37px;text-align:center;top:1.50px;font-size:13px;line-height:13px;transform:scaleX(0.926);transform-origin:50% 0;color:#000">3д...</span></div><div class="c" style="left:220px;top:290px;width:38px;background:#ff00ff"><span class="t" style="left:0px;width:38px;text-align:center;top:1.50px;font-size:13px;line-height:13px;transform:scaleX(1.060);transform-origin:50% 0;color:#000">1кол</span></div><div class="c" style="left:259px;top:290px;width:37px;background:#66f033"><span class="t" style="left:0px;width:37px;text-align:center;top:1.50px;font-size:13px;line-height:13px;transform:scaleX(0.995);transform-origin:50% 0;color:#000">6six</span></div><div class="c" style="left:297px;top:290px;width:38px;background:#ff9966"><span class="t" style="left:2.5px;top:1.50px;font-size:13px;line-height:13px;transform:scaleX(0.969);transform-origin:0 0;color:#000">Orph</span></div><div class="c" style="left:336px;top:290px;width:58px;background:#cc66cc"><span class="t" style="left:2.5px;top:1.50px;font-size:13px;line-height:13px;transform:scaleX(1.002);transform-origin:0 0;color:#000">11str</span></div>
<div class="c" style="left:0px;top:307px;width:28px;background:#c0dcc0"><span class="t" style="left:0px;width:28px;text-align:center;top:1.50px;font-size:13px;line-height:13px;transform:scaleX(0.922);transform-origin:50% 0;color:#000">197</span></div><div class="c" style="left:29px;top:307px;width:38px;background:#ffff99"><span class="t" style="left:0px;width:38px;text-align:center;top:2.69px;font-size:11px;line-height:11px;color:#000">35</span></div><div class="c" style="left:68px;top:307px;width:37px;background:#000"><span class="t" style="left:2.5px;top:1.50px;font-size:13px;line-height:13px;transform:scaleX(1.126);transform-origin:0 0;color:#ffff00">черн</span></div><div class="c" style="left:106px;top:307px;width:37px;background:#66f033"><span class="t" style="left:0px;width:37px;text-align:center;top:1.50px;font-size:13px;line-height:13px;transform:scaleX(1.108);transform-origin:50% 0;color:#000">неч</span></div><div class="c" style="left:144px;top:307px;width:37px;background:#ff9966"><span class="t" style="left:0px;width:37px;text-align:center;top:1.50px;font-size:13px;line-height:13px;transform:scaleX(0.925);transform-origin:50% 0;color:#000">19-36</span></div><div class="c" style="left:182px;top:307px;width:37px;background:#ff66ff"><span class="t" style="left:0px;width:37px;text-align:center;top:1.50px;font-size:13px;line-height:13px;transform:scaleX(0.926);transform-origin:50% 0;color:#000">3д...</span></div><div class="c" style="left:220px;top:307px;width:38px;background:#00ee00"><span class="t" style="left:0px;width:38px;text-align:center;top:1.50px;font-size:13px;line-height:13px;transform:scaleX(1.060);transform-origin:50% 0;color:#000">2кол</span></div><div class="c" style="left:259px;top:307px;width:37px;background:#66f033"><span class="t" style="left:0px;width:37px;text-align:center;top:1.50px;font-size:13px;line-height:13px;transform:scaleX(0.995);transform-origin:50% 0;color:#000">6six</span></div><div class="c" style="left:297px;top:307px;width:38px;background:#99ffcc"><span class="t" style="left:2.5px;top:1.50px;font-size:13px;line-height:13px;transform:scaleX(0.960);transform-origin:0 0;color:#000">VdZ...</span></div><div class="c" style="left:336px;top:307px;width:58px;background:#ff99cc"><span class="t" style="left:2.5px;top:1.50px;font-size:13px;line-height:13px;transform:scaleX(0.969);transform-origin:0 0;color:#000">12str</span></div>
<div class="c" style="left:0px;top:324px;width:28px;background:#c0dcc0"><span class="t" style="left:0px;width:28px;text-align:center;top:1.50px;font-size:13px;line-height:13px;transform:scaleX(0.922);transform-origin:50% 0;color:#000">196</span></div><div class="c" style="left:29px;top:324px;width:38px;background:#ffff99"><span class="t" style="left:0px;width:38px;text-align:center;top:2.69px;font-size:11px;line-height:11px;color:#000">5</span></div><div class="c" style="left:68px;top:324px;width:37px;background:#cc0066"><span class="t" style="left:2.5px;top:1.50px;font-size:13px;line-height:13px;transform:scaleX(1.001);transform-origin:0 0;color:#ffff00">кра...</span></div><div class="c" style="left:106px;top:324px;width:37px;background:#66f033"><span class="t" style="left:0px;width:37px;text-align:center;top:1.50px;font-size:13px;line-height:13px;transform:scaleX(1.108);transform-origin:50% 0;color:#000">неч</span></div><div class="c" style="left:144px;top:324px;width:37px;background:#99ffcc"><span class="t" style="left:0px;width:37px;text-align:center;top:1.50px;font-size:13px;line-height:13px;transform:scaleX(0.960);transform-origin:50% 0;color:#000">1-18</span></div><div class="c" style="left:182px;top:324px;width:37px;background:#33ccff"><span class="t" style="left:0px;width:37px;text-align:center;top:1.50px;font-size:13px;line-height:13px;transform:scaleX(0.926);transform-origin:50% 0;color:#000">1д...</span></div><div class="c" style="left:220px;top:324px;width:38px;background:#00ee00"><span class="t" style="left:0px;width:38px;text-align:center;top:1.50px;font-size:13px;line-height:13px;transform:scaleX(1.060);transform-origin:50% 0;color:#000">2кол</span></div><div class="c" style="left:259px;top:324px;width:37px;background:#33ccff"><span class="t" style="left:0px;width:37px;text-align:center;top:1.50px;font-size:13px;line-height:13px;transform:scaleX(0.995);transform-origin:50% 0;color:#000">1six</span></div><div class="c" style="left:297px;top:324px;width:38px;background:#33ccff"><span class="t" style="left:2.5px;top:1.50px;font-size:13px;line-height:13px;transform:scaleX(1.074);transform-origin:0 0;color:#000">Tiers</span></div><div class="c" style="left:336px;top:324px;width:58px;background:#66f033"><span class="t" style="left:2.5px;top:1.50px;font-size:13px;line-height:13px;transform:scaleX(1.004);transform-origin:0 0;color:#000">2str</span></div>
<div class="c" style="left:0px;top:341px;width:28px;background:#c0dcc0"><span class="t" style="left:0px;width:28px;text-align:center;top:1.50px;font-size:13px;line-height:13px;transform:scaleX(0.922);transform-origin:50% 0;color:#000">195</span></div><div class="c" style="left:29px;top:341px;width:38px;background:#ffff99"><span class="t" style="left:0px;width:38px;text-align:center;top:2.69px;font-size:11px;line-height:11px;color:#000">1</span></div><div class="c" style="left:68px;top:341px;width:37px;background:#cc0066"><span class="t" style="left:2.5px;top:1.50px;font-size:13px;line-height:13px;transform:scaleX(1.001);transform-origin:0 0;color:#ffff00">кра...</span></div><div class="c" style="left:106px;top:341px;width:37px;background:#66f033"><span class="t" style="left:0px;width:37px;text-align:center;top:1.50px;font-size:13px;line-height:13px;transform:scaleX(1.108);transform-origin:50% 0;color:#000">неч</span></div><div class="c" style="left:144px;top:341px;width:37px;background:#99ffcc"><span class="t" style="left:0px;width:37px;text-align:center;top:1.50px;font-size:13px;line-height:13px;transform:scaleX(0.960);transform-origin:50% 0;color:#000">1-18</span></div><div class="c" style="left:182px;top:341px;width:37px;background:#33ccff"><span class="t" style="left:0px;width:37px;text-align:center;top:1.50px;font-size:13px;line-height:13px;transform:scaleX(0.926);transform-origin:50% 0;color:#000">1д...</span></div><div class="c" style="left:220px;top:341px;width:38px;background:#ff00ff"><span class="t" style="left:0px;width:38px;text-align:center;top:1.50px;font-size:13px;line-height:13px;transform:scaleX(1.060);transform-origin:50% 0;color:#000">1кол</span></div><div class="c" style="left:259px;top:341px;width:37px;background:#33ccff"><span class="t" style="left:0px;width:37px;text-align:center;top:1.50px;font-size:13px;line-height:13px;transform:scaleX(0.995);transform-origin:50% 0;color:#000">1six</span></div><div class="c" style="left:297px;top:341px;width:38px;background:#ff9966"><span class="t" style="left:2.5px;top:1.50px;font-size:13px;line-height:13px;transform:scaleX(0.969);transform-origin:0 0;color:#000">Orph</span></div><div class="c" style="left:336px;top:341px;width:58px;background:#0066ff"><span class="t" style="left:2.5px;top:1.50px;font-size:13px;line-height:13px;transform:scaleX(1.004);transform-origin:0 0;color:#000">1str</span></div>
<div class="c" style="left:0px;top:358px;width:28px;background:#c0dcc0"><span class="t" style="left:0px;width:28px;text-align:center;top:1.50px;font-size:13px;line-height:13px;transform:scaleX(0.922);transform-origin:50% 0;color:#000">194</span></div><div class="c" style="left:29px;top:358px;width:38px;background:#ffff99"><span class="t" style="left:0px;width:38px;text-align:center;top:2.69px;font-size:11px;line-height:11px;color:#000">28</span></div><div class="c" style="left:68px;top:358px;width:37px;background:#000"><span class="t" style="left:2.5px;top:1.50px;font-size:13px;line-height:13px;transform:scaleX(1.126);transform-origin:0 0;color:#ffff00">черн</span></div><div class="c" style="left:106px;top:358px;width:37px;background:#ffff99"><span class="t" style="left:0px;width:37px;text-align:center;top:1.50px;font-size:13px;line-height:13px;transform:scaleX(1.152);transform-origin:50% 0;color:#000">чет</span></div><div class="c" style="left:144px;top:358px;width:37px;background:#ff9966"><span class="t" style="left:0px;width:37px;text-align:center;top:1.50px;font-size:13px;line-height:13px;transform:scaleX(0.925);transform-origin:50% 0;color:#000">19-36</span></div><div class="c" style="left:182px;top:358px;width:37px;background:#ff66ff"><span class="t" style="left:0px;width:37px;text-align:center;top:1.50px;font-size:13px;line-height:13px;transform:scaleX(0.926);transform-origin:50% 0;color:#000">3д...</span></div><div class="c" style="left:220px;top:358px;width:38px;background:#ff00ff"><span class="t" style="left:0px;width:38px;text-align:center;top:1.50px;font-size:13px;line-height:13px;transform:scaleX(1.060);transform-origin:50% 0;color:#000">1кол</span></div><div class="c" style="left:259px;top:358px;width:37px;background:#ffff99"><span class="t" style="left:0px;width:37px;text-align:center;top:1.50px;font-size:13px;line-height:13px;transform:scaleX(0.995);transform-origin:50% 0;color:#000">5six</span></div><div class="c" style="left:297px;top:358px;width:38px;background:#66f033"><span class="t" style="left:2.5px;top:1.50px;font-size:13px;line-height:13px;transform:scaleX(1.048);transform-origin:0 0;color:#000">VdZ</span></div><div class="c" style="left:336px;top:358px;width:58px;background:#33cc99"><span class="t" style="left:2.5px;top:1.50px;font-size:13px;line-height:13px;transform:scaleX(0.969);transform-origin:0 0;color:#000">10str</span></div>
<div class="c" style="left:0px;top:375px;width:28px;background:#c0dcc0"><span class="t" style="left:0px;width:28px;text-align:center;top:1.50px;font-size:13px;line-height:13px;transform:scaleX(0.922);transform-origin:50% 0;color:#000">193</span></div><div class="c" style="left:29px;top:375px;width:38px;background:#ffff99"><span class="t" style="left:0px;width:38px;text-align:center;top:2.69px;font-size:11px;line-height:11px;color:#000">25</span></div><div class="c" style="left:68px;top:375px;width:37px;background:#cc0066"><span class="t" style="left:2.5px;top:1.50px;font-size:13px;line-height:13px;transform:scaleX(1.001);transform-origin:0 0;color:#ffff00">кра...</span></div><div class="c" style="left:106px;top:375px;width:37px;background:#66f033"><span class="t" style="left:0px;width:37px;text-align:center;top:1.50px;font-size:13px;line-height:13px;transform:scaleX(1.108);transform-origin:50% 0;color:#000">неч</span></div><div class="c" style="left:144px;top:375px;width:37px;background:#ff9966"><span class="t" style="left:0px;width:37px;text-align:center;top:1.50px;font-size:13px;line-height:13px;transform:scaleX(0.925);transform-origin:50% 0;color:#000">19-36</span></div><div class="c" style="left:182px;top:375px;width:37px;background:#ff66ff"><span class="t" style="left:0px;width:37px;text-align:center;top:1.50px;font-size:13px;line-height:13px;transform:scaleX(0.926);transform-origin:50% 0;color:#000">3д...</span></div><div class="c" style="left:220px;top:375px;width:38px;background:#ff00ff"><span class="t" style="left:0px;width:38px;text-align:center;top:1.50px;font-size:13px;line-height:13px;transform:scaleX(1.060);transform-origin:50% 0;color:#000">1кол</span></div><div class="c" style="left:259px;top:375px;width:37px;background:#ffff99"><span class="t" style="left:0px;width:37px;text-align:center;top:1.50px;font-size:13px;line-height:13px;transform:scaleX(0.995);transform-origin:50% 0;color:#000">5six</span></div><div class="c" style="left:297px;top:375px;width:38px;background:#66f033"><span class="t" style="left:2.5px;top:1.50px;font-size:13px;line-height:13px;transform:scaleX(1.048);transform-origin:0 0;color:#000">VdZ</span></div><div class="c" style="left:336px;top:375px;width:58px;background:#cc6600"><span class="t" style="left:2.5px;top:1.50px;font-size:13px;line-height:13px;transform:scaleX(1.004);transform-origin:0 0;color:#000">9str</span></div>
<div class="c" style="left:0px;top:392px;width:28px;background:#c0dcc0"><span class="t" style="left:0px;width:28px;text-align:center;top:1.50px;font-size:13px;line-height:13px;transform:scaleX(0.922);transform-origin:50% 0;color:#000">192</span></div><div class="c" style="left:29px;top:392px;width:38px;background:#ffff99"><span class="t" style="left:0px;width:38px;text-align:center;top:2.69px;font-size:11px;line-height:11px;color:#000">36</span></div><div class="c" style="left:68px;top:392px;width:37px;background:#cc0066"><span class="t" style="left:2.5px;top:1.50px;font-size:13px;line-height:13px;transform:scaleX(1.001);transform-origin:0 0;color:#ffff00">кра...</span></div><div class="c" style="left:106px;top:392px;width:37px;background:#ffff99"><span class="t" style="left:0px;width:37px;text-align:center;top:1.50px;font-size:13px;line-height:13px;transform:scaleX(1.152);transform-origin:50% 0;color:#000">чет</span></div><div class="c" style="left:144px;top:392px;width:37px;background:#ff9966"><span class="t" style="left:0px;width:37px;text-align:center;top:1.50px;font-size:13px;line-height:13px;transform:scaleX(0.925);transform-origin:50% 0;color:#000">19-36</span></div><div class="c" style="left:182px;top:392px;width:37px;background:#ff66ff"><span class="t" style="left:0px;width:37px;text-align:center;top:1.50px;font-size:13px;line-height:13px;transform:scaleX(0.926);transform-origin:50% 0;color:#000">3д...</span></div><div class="c" style="left:220px;top:392px;width:38px;background:#ffff00"><span class="t" style="left:0px;width:38px;text-align:center;top:1.50px;font-size:13px;line-height:13px;transform:scaleX(1.060);transform-origin:50% 0;color:#000">3кол</span></div><div class="c" style="left:259px;top:392px;width:37px;background:#66f033"><span class="t" style="left:0px;width:37px;text-align:center;top:1.50px;font-size:13px;line-height:13px;transform:scaleX(0.995);transform-origin:50% 0;color:#000">6six</span></div><div class="c" style="left:297px;top:392px;width:38px;background:#33ccff"><span class="t" style="left:2.5px;top:1.50px;font-size:13px;line-height:13px;transform:scaleX(1.074);transform-origin:0 0;color:#000">Tiers</span></div><div class="c" style="left:336px;top:392px;width:58px;background:#ff99cc"><span class="t" style="left:2.5px;top:1.50px;font-size:13px;line-height:13px;transform:scaleX(0.969);transform-origin:0 0;color:#000">12str</span></div>
<div class="c" style="left:0px;top:409px;width:28px;background:#c0dcc0"><span class="t" style="left:0px;width:28px;text-align:center;top:1.50px;font-size:13px;line-height:13px;transform:scaleX(0.922);transform-origin:50% 0;color:#000">191</span></div><div class="c" style="left:29px;top:409px;width:38px;background:#ffff99"><span class="t" style="left:0px;width:38px;text-align:center;top:2.69px;font-size:11px;line-height:11px;color:#000">27</span></div><div class="c" style="left:68px;top:409px;width:37px;background:#cc0066"><span class="t" style="left:2.5px;top:1.50px;font-size:13px;line-height:13px;transform:scaleX(1.001);transform-origin:0 0;color:#ffff00">кра...</span></div><div class="c" style="left:106px;top:409px;width:37px;background:#66f033"><span class="t" style="left:0px;width:37px;text-align:center;top:1.50px;font-size:13px;line-height:13px;transform:scaleX(1.108);transform-origin:50% 0;color:#000">неч</span></div><div class="c" style="left:144px;top:409px;width:37px;background:#ff9966"><span class="t" style="left:0px;width:37px;text-align:center;top:1.50px;font-size:13px;line-height:13px;transform:scaleX(0.925);transform-origin:50% 0;color:#000">19-36</span></div><div class="c" style="left:182px;top:409px;width:37px;background:#ff66ff"><span class="t" style="left:0px;width:37px;text-align:center;top:1.50px;font-size:13px;line-height:13px;transform:scaleX(0.926);transform-origin:50% 0;color:#000">3д...</span></div><div class="c" style="left:220px;top:409px;width:38px;background:#ffff00"><span class="t" style="left:0px;width:38px;text-align:center;top:1.50px;font-size:13px;line-height:13px;transform:scaleX(1.060);transform-origin:50% 0;color:#000">3кол</span></div><div class="c" style="left:259px;top:409px;width:37px;background:#ffff99"><span class="t" style="left:0px;width:37px;text-align:center;top:1.50px;font-size:13px;line-height:13px;transform:scaleX(0.995);transform-origin:50% 0;color:#000">5six</span></div><div class="c" style="left:297px;top:409px;width:38px;background:#33ccff"><span class="t" style="left:2.5px;top:1.50px;font-size:13px;line-height:13px;transform:scaleX(1.074);transform-origin:0 0;color:#000">Tiers</span></div><div class="c" style="left:336px;top:409px;width:58px;background:#cc6600"><span class="t" style="left:2.5px;top:1.50px;font-size:13px;line-height:13px;transform:scaleX(1.004);transform-origin:0 0;color:#000">9str</span></div>
<div class="c" style="left:0px;top:426px;width:28px;background:#c0dcc0"><span class="t" style="left:0px;width:28px;text-align:center;top:1.50px;font-size:13px;line-height:13px;transform:scaleX(0.922);transform-origin:50% 0;color:#000">190</span></div><div class="c" style="left:29px;top:426px;width:38px;background:#ffff99"><span class="t" style="left:0px;width:38px;text-align:center;top:2.69px;font-size:11px;line-height:11px;color:#000">16</span></div><div class="c" style="left:68px;top:426px;width:37px;background:#cc0066"><span class="t" style="left:2.5px;top:1.50px;font-size:13px;line-height:13px;transform:scaleX(1.001);transform-origin:0 0;color:#ffff00">кра...</span></div><div class="c" style="left:106px;top:426px;width:37px;background:#ffff99"><span class="t" style="left:0px;width:37px;text-align:center;top:1.50px;font-size:13px;line-height:13px;transform:scaleX(1.152);transform-origin:50% 0;color:#000">чет</span></div><div class="c" style="left:144px;top:426px;width:37px;background:#99ffcc"><span class="t" style="left:0px;width:37px;text-align:center;top:1.50px;font-size:13px;line-height:13px;transform:scaleX(0.960);transform-origin:50% 0;color:#000">1-18</span></div><div class="c" style="left:182px;top:426px;width:37px;background:#ffff99"><span class="t" style="left:0px;width:37px;text-align:center;top:1.50px;font-size:13px;line-height:13px;transform:scaleX(0.926);transform-origin:50% 0;color:#000">2д...</span></div><div class="c" style="left:220px;top:426px;width:38px;background:#ff00ff"><span class="t" style="left:0px;width:38px;text-align:center;top:1.50px;font-size:13px;line-height:13px;transform:scaleX(1.060);transform-origin:50% 0;color:#000">1кол</span></div><div class="c" style="left:259px;top:426px;width:37px;background:#ff66ff"><span class="t" style="left:0px;width:37px;text-align:center;top:1.50px;font-size:13px;line-height:13px;transform:scaleX(0.995);transform-origin:50% 0;color:#000">3six</span></div><div class="c" style="left:297px;top:426px;width:38px;background:#33ccff"><span class="t" style="left:2.5px;top:1.50px;font-size:13px;line-height:13px;transform:scaleX(1.074);transform-origin:0 0;color:#000">Tiers</span></div><div class="c" style="left:336px;top:426px;width:58px;background:#cccc00"><span class="t" style="left:2.5px;top:1.50px;font-size:13px;line-height:13px;transform:scaleX(1.004);transform-origin:0 0;color:#000">6str</span></div>
<div class="c" style="left:0px;top:443px;width:28px;background:#c0dcc0"><span class="t" style="left:0px;width:28px;text-align:center;top:1.50px;font-size:13px;line-height:13px;transform:scaleX(0.922);transform-origin:50% 0;color:#000">189</span></div><div class="c" style="left:29px;top:443px;width:38px;background:#ffff99"><span class="t" style="left:0px;width:38px;text-align:center;top:2.69px;font-size:11px;line-height:11px;color:#000">33</span></div><div class="c" style="left:68px;top:443px;width:37px;background:#000"><span class="t" style="left:2.5px;top:1.50px;font-size:13px;line-height:13px;transform:scaleX(1.126);transform-origin:0 0;color:#ffff00">черн</span></div><div class="c" style="left:106px;top:443px;width:37px;background:#66f033"><span class="t" style="left:0px;width:37px;text-align:center;top:1.50px;font-size:13px;line-height:13px;transform:scaleX(1.108);transform-origin:50% 0;color:#000">неч</span></div><div class="c" style="left:144px;top:443px;width:37px;background:#ff9966"><span class="t" style="left:0px;width:37px;text-align:center;top:1.50px;font-size:13px;line-height:13px;transform:scaleX(0.925);transform-origin:50% 0;color:#000">19-36</span></div><div class="c" style="left:182px;top:443px;width:37px;background:#ff66ff"><span class="t" style="left:0px;width:37px;text-align:center;top:1.50px;font-size:13px;line-height:13px;transform:scaleX(0.926);transform-origin:50% 0;color:#000">3д...</span></div><div class="c" style="left:220px;top:443px;width:38px;background:#ffff00"><span class="t" style="left:0px;width:38px;text-align:center;top:1.50px;font-size:13px;line-height:13px;transform:scaleX(1.060);transform-origin:50% 0;color:#000">3кол</span></div><div class="c" style="left:259px;top:443px;width:37px;background:#66f033"><span class="t" style="left:0px;width:37px;text-align:center;top:1.50px;font-size:13px;line-height:13px;transform:scaleX(0.995);transform-origin:50% 0;color:#000">6six</span></div><div class="c" style="left:297px;top:443px;width:38px;background:#33ccff"><span class="t" style="left:2.5px;top:1.50px;font-size:13px;line-height:13px;transform:scaleX(1.074);transform-origin:0 0;color:#000">Tiers</span></div><div class="c" style="left:336px;top:443px;width:58px;background:#cc66cc"><span class="t" style="left:2.5px;top:1.50px;font-size:13px;line-height:13px;transform:scaleX(1.002);transform-origin:0 0;color:#000">11str</span></div>
<div class="c" style="left:0px;top:460px;width:28px;background:#c0dcc0"><span class="t" style="left:0px;width:28px;text-align:center;top:1.50px;font-size:13px;line-height:13px;transform:scaleX(0.922);transform-origin:50% 0;color:#000">188</span></div><div class="c" style="left:29px;top:460px;width:38px;background:#ffff99"><span class="t" style="left:0px;width:38px;text-align:center;top:2.69px;font-size:11px;line-height:11px;color:#000">7</span></div><div class="c" style="left:68px;top:460px;width:37px;background:#cc0066"><span class="t" style="left:2.5px;top:1.50px;font-size:13px;line-height:13px;transform:scaleX(1.001);transform-origin:0 0;color:#ffff00">кра...</span></div><div class="c" style="left:106px;top:460px;width:37px;background:#66f033"><span class="t" style="left:0px;width:37px;text-align:center;top:1.50px;font-size:13px;line-height:13px;transform:scaleX(1.108);transform-origin:50% 0;color:#000">неч</span></div><div class="c" style="left:144px;top:460px;width:37px;background:#99ffcc"><span class="t" style="left:0px;width:37px;text-align:center;top:1.50px;font-size:13px;line-height:13px;transform:scaleX(0.960);transform-origin:50% 0;color:#000">1-18</span></div><div class="c" style="left:182px;top:460px;width:37px;background:#33ccff"><span class="t" style="left:0px;width:37px;text-align:center;top:1.50px;font-size:13px;line-height:13px;transform:scaleX(0.926);transform-origin:50% 0;color:#000">1д...</span></div><div class="c" style="left:220px;top:460px;width:38px;background:#ff00ff"><span class="t" style="left:0px;width:38px;text-align:center;top:1.50px;font-size:13px;line-height:13px;transform:scaleX(1.060);transform-origin:50% 0;color:#000">1кол</span></div><div class="c" style="left:259px;top:460px;width:37px;background:#cc6600"><span class="t" style="left:0px;width:37px;text-align:center;top:1.50px;font-size:13px;line-height:13px;transform:scaleX(0.995);transform-origin:50% 0;color:#000">2six</span></div><div class="c" style="left:297px;top:460px;width:38px;background:#66f033"><span class="t" style="left:2.5px;top:1.50px;font-size:13px;line-height:13px;transform:scaleX(1.048);transform-origin:0 0;color:#000">VdZ</span></div><div class="c" style="left:336px;top:460px;width:58px;background:#ff9966"><span class="t" style="left:2.5px;top:1.50px;font-size:13px;line-height:13px;transform:scaleX(1.004);transform-origin:0 0;color:#000">3str</span></div>
<div class="c" style="left:0px;top:477px;width:28px;background:#c0dcc0"><span class="t" style="left:0px;width:28px;text-align:center;top:1.50px;font-size:13px;line-height:13px;transform:scaleX(0.922);transform-origin:50% 0;color:#000">187</span></div><div class="c" style="left:29px;top:477px;width:38px;background:#ffff99"><span class="t" style="left:0px;width:38px;text-align:center;top:2.69px;font-size:11px;line-height:11px;color:#000">5</span></div><div class="c" style="left:68px;top:477px;width:37px;background:#cc0066"><span class="t" style="left:2.5px;top:1.50px;font-size:13px;line-height:13px;transform:scaleX(1.001);transform-origin:0 0;color:#ffff00">кра...</span></div><div class="c" style="left:106px;top:477px;width:37px;background:#66f033"><span class="t" style="left:0px;width:37px;text-align:center;top:1.50px;font-size:13px;line-height:13px;transform:scaleX(1.108);transform-origin:50% 0;color:#000">неч</span></div><div class="c" style="left:144px;top:477px;width:37px;background:#99ffcc"><span class="t" style="left:0px;width:37px;text-align:center;top:1.50px;font-size:13px;line-height:13px;transform:scaleX(0.960);transform-origin:50% 0;color:#000">1-18</span></div><div class="c" style="left:182px;top:477px;width:37px;background:#33ccff"><span class="t" style="left:0px;width:37px;text-align:center;top:1.50px;font-size:13px;line-height:13px;transform:scaleX(0.926);transform-origin:50% 0;color:#000">1д...</span></div><div class="c" style="left:220px;top:477px;width:38px;background:#00ee00"><span class="t" style="left:0px;width:38px;text-align:center;top:1.50px;font-size:13px;line-height:13px;transform:scaleX(1.060);transform-origin:50% 0;color:#000">2кол</span></div><div class="c" style="left:259px;top:477px;width:37px;background:#33ccff"><span class="t" style="left:0px;width:37px;text-align:center;top:1.50px;font-size:13px;line-height:13px;transform:scaleX(0.995);transform-origin:50% 0;color:#000">1six</span></div><div class="c" style="left:297px;top:477px;width:38px;background:#33ccff"><span class="t" style="left:2.5px;top:1.50px;font-size:13px;line-height:13px;transform:scaleX(1.074);transform-origin:0 0;color:#000">Tiers</span></div><div class="c" style="left:336px;top:477px;width:58px;background:#66f033"><span class="t" style="left:2.5px;top:1.50px;font-size:13px;line-height:13px;transform:scaleX(1.004);transform-origin:0 0;color:#000">2str</span></div>
<div class="c" style="left:0px;top:494px;width:28px;background:#c0dcc0"><span class="t" style="left:0px;width:28px;text-align:center;top:1.50px;font-size:13px;line-height:13px;transform:scaleX(0.922);transform-origin:50% 0;color:#000">186</span></div><div class="c" style="left:29px;top:494px;width:38px;background:#ffff99"><span class="t" style="left:0px;width:38px;text-align:center;top:2.69px;font-size:11px;line-height:11px;color:#000">21</span></div><div class="c" style="left:68px;top:494px;width:37px;background:#cc0066"><span class="t" style="left:2.5px;top:1.50px;font-size:13px;line-height:13px;transform:scaleX(1.001);transform-origin:0 0;color:#ffff00">кра...</span></div><div class="c" style="left:106px;top:494px;width:37px;background:#66f033"><span class="t" style="left:0px;width:37px;text-align:center;top:1.50px;font-size:13px;line-height:13px;transform:scaleX(1.108);transform-origin:50% 0;color:#000">неч</span></div><div class="c" style="left:144px;top:494px;width:37px;background:#ff9966"><span class="t" style="left:0px;width:37px;text-align:center;top:1.50px;font-size:13px;line-height:13px;transform:scaleX(0.925);transform-origin:50% 0;color:#000">19-36</span></div><div class="c" style="left:182px;top:494px;width:37px;background:#ffff99"><span class="t" style="left:0px;width:37px;text-align:center;top:1.50px;font-size:13px;line-height:13px;transform:scaleX(0.926);transform-origin:50% 0;color:#000">2д...</span></div><div class="c" style="left:220px;top:494px;width:38px;background:#ffff00"><span class="t" style="left:0px;width:38px;text-align:center;top:1.50px;font-size:13px;line-height:13px;transform:scaleX(1.060);transform-origin:50% 0;color:#000">3кол</span></div><div class="c" style="left:259px;top:494px;width:37px;background:#99ffcc"><span class="t" style="left:0px;width:37px;text-align:center;top:1.50px;font-size:13px;line-height:13px;transform:scaleX(0.995);transform-origin:50% 0;color:#000">4six</span></div><div class="c" style="left:297px;top:494px;width:38px;background:#66f033"><span class="t" style="left:2.5px;top:1.50px;font-size:13px;line-height:13px;transform:scaleX(1.048);transform-origin:0 0;color:#000">VdZ</span></div><div class="c" style="left:336px;top:494px;width:58px;background:#ffff00"><span class="t" style="left:2.5px;top:1.50px;font-size:13px;line-height:13px;transform:scaleX(1.004);transform-origin:0 0;color:#000">7str</span></div>
<div class="c" style="left:0px;top:511px;width:28px;background:#c0dcc0"><span class="t" style="left:0px;width:28px;text-align:center;top:1.50px;font-size:13px;line-height:13px;transform:scaleX(0.922);transform-origin:50% 0;color:#000">185</span></div><div class="c" style="left:29px;top:511px;width:38px;background:#ffff99"><span class="t" style="left:0px;width:38px;text-align:center;top:2.69px;font-size:11px;line-height:11px;color:#000">13</span></div><div class="c" style="left:68px;top:511px;width:37px;background:#000"><span class="t" style="left:2.5px;top:1.50px;font-size:13px;line-height:13px;transform:scaleX(1.126);transform-origin:0 0;color:#ffff00">черн</span></div><div class="c" style="left:106px;top:511px;width:37px;background:#66f033"><span class="t" style="left:0px;width:37px;text-align:center;top:1.50px;font-size:13px;line-height:13px;transform:scaleX(1.108);transform-origin:50% 0;color:#000">неч</span></div><div class="c" style="left:144px;top:511px;width:37px;background:#99ffcc"><span class="t" style="left:0px;width:37px;text-align:center;top:1.50px;font-size:13px;line-height:13px;transform:scaleX(0.960);transform-origin:50% 0;color:#000">1-18</span></div><div class="c" style="left:182px;top:511px;width:37px;background:#ffff99"><span class="t" style="left:0px;width:37px;text-align:center;top:1.50px;font-size:13px;line-height:13px;transform:scaleX(0.926);transform-origin:50% 0;color:#000">2д...</span></div><div class="c" style="left:220px;top:511px;width:38px;background:#ff00ff"><span class="t" style="left:0px;width:38px;text-align:center;top:1.50px;font-size:13px;line-height:13px;transform:scaleX(1.060);transform-origin:50% 0;color:#000">1кол</span></div><div class="c" style="left:259px;top:511px;width:37px;background:#ff66ff"><span class="t" style="left:0px;width:37px;text-align:center;top:1.50px;font-size:13px;line-height:13px;transform:scaleX(0.995);transform-origin:50% 0;color:#000">3six</span></div><div class="c" style="left:297px;top:511px;width:38px;background:#33ccff"><span class="t" style="left:2.5px;top:1.50px;font-size:13px;line-height:13px;transform:scaleX(1.074);transform-origin:0 0;color:#000">Tiers</span></div><div class="c" style="left:336px;top:511px;width:58px;background:#ffffcc"><span class="t" style="left:2.5px;top:1.50px;font-size:13px;line-height:13px;transform:scaleX(1.004);transform-origin:0 0;color:#000">5str</span></div>
<div class="c" style="left:0px;top:528px;width:28px;background:#c0dcc0"><span class="t" style="left:0px;width:28px;text-align:center;top:1.50px;font-size:13px;line-height:13px;transform:scaleX(0.922);transform-origin:50% 0;color:#000">184</span></div><div class="c" style="left:29px;top:528px;width:38px;background:#ffff99"><span class="t" style="left:0px;width:38px;text-align:center;top:2.69px;font-size:11px;line-height:11px;color:#000">33</span></div><div class="c" style="left:68px;top:528px;width:37px;background:#000"><span class="t" style="left:2.5px;top:1.50px;font-size:13px;line-height:13px;transform:scaleX(1.126);transform-origin:0 0;color:#ffff00">черн</span></div><div class="c" style="left:106px;top:528px;width:37px;background:#66f033"><span class="t" style="left:0px;width:37px;text-align:center;top:1.50px;font-size:13px;line-height:13px;transform:scaleX(1.108);transform-origin:50% 0;color:#000">неч</span></div><div class="c" style="left:144px;top:528px;width:37px;background:#ff9966"><span class="t" style="left:0px;width:37px;text-align:center;top:1.50px;font-size:13px;line-height:13px;transform:scaleX(0.925);transform-origin:50% 0;color:#000">19-36</span></div><div class="c" style="left:182px;top:528px;width:37px;background:#ff66ff"><span class="t" style="left:0px;width:37px;text-align:center;top:1.50px;font-size:13px;line-height:13px;transform:scaleX(0.926);transform-origin:50% 0;color:#000">3д...</span></div><div class="c" style="left:220px;top:528px;width:38px;background:#ffff00"><span class="t" style="left:0px;width:38px;text-align:center;top:1.50px;font-size:13px;line-height:13px;transform:scaleX(1.060);transform-origin:50% 0;color:#000">3кол</span></div><div class="c" style="left:259px;top:528px;width:37px;background:#66f033"><span class="t" style="left:0px;width:37px;text-align:center;top:1.50px;font-size:13px;line-height:13px;transform:scaleX(0.995);transform-origin:50% 0;color:#000">6six</span></div><div class="c" style="left:297px;top:528px;width:38px;background:#33ccff"><span class="t" style="left:2.5px;top:1.50px;font-size:13px;line-height:13px;transform:scaleX(1.074);transform-origin:0 0;color:#000">Tiers</span></div><div class="c" style="left:336px;top:528px;width:58px;background:#cc66cc"><span class="t" style="left:2.5px;top:1.50px;font-size:13px;line-height:13px;transform:scaleX(1.002);transform-origin:0 0;color:#000">11str</span></div>
<div class="c" style="left:0px;top:545px;width:28px;background:#c0dcc0"><span class="t" style="left:0px;width:28px;text-align:center;top:1.50px;font-size:13px;line-height:13px;transform:scaleX(0.922);transform-origin:50% 0;color:#000">183</span></div><div class="c" style="left:29px;top:545px;width:38px;background:#ffff99"><span class="t" style="left:0px;width:38px;text-align:center;top:2.69px;font-size:11px;line-height:11px;color:#000">24</span></div><div class="c" style="left:68px;top:545px;width:37px;background:#000"><span class="t" style="left:2.5px;top:1.50px;font-size:13px;line-height:13px;transform:scaleX(1.126);transform-origin:0 0;color:#ffff00">черн</span></div><div class="c" style="left:106px;top:545px;width:37px;background:#ffff99"><span class="t" style="left:0px;width:37px;text-align:center;top:1.50px;font-size:13px;line-height:13px;transform:scaleX(1.152);transform-origin:50% 0;color:#000">чет</span></div><div class="c" style="left:144px;top:545px;width:37px;background:#ff9966"><span class="t" style="left:0px;width:37px;text-align:center;top:1.50px;font-size:13px;line-height:13px;transform:scaleX(0.925);transform-origin:50% 0;color:#000">19-36</span></div><div class="c" style="left:182px;top:545px;width:37px;background:#ffff99"><span class="t" style="left:0px;width:37px;text-align:center;top:1.50px;font-size:13px;line-height:13px;transform:scaleX(0.926);transform-origin:50% 0;color:#000">2д...</span></div><div class="c" style="left:220px;top:545px;width:38px;background:#ffff00"><span class="t" style="left:0px;width:38px;text-align:center;top:1.50px;font-size:13px;line-height:13px;transform:scaleX(1.060);transform-origin:50% 0;color:#000">3кол</span></div><div class="c" style="left:259px;top:545px;width:37px;background:#99ffcc"><span class="t" style="left:0px;width:37px;text-align:center;top:1.50px;font-size:13px;line-height:13px;transform:scaleX(0.995);transform-origin:50% 0;color:#000">4six</span></div><div class="c" style="left:297px;top:545px;width:38px;background:#33ccff"><span class="t" style="left:2.5px;top:1.50px;font-size:13px;line-height:13px;transform:scaleX(1.074);transform-origin:0 0;color:#000">Tiers</span></div><div class="c" style="left:336px;top:545px;width:58px;background:#00ffff"><span class="t" style="left:2.5px;top:1.50px;font-size:13px;line-height:13px;transform:scaleX(1.004);transform-origin:0 0;color:#000">8str</span></div>
<div class="vsb" style="left:396px;top:1px;width:16px;height:560px"><svg width="16" height="17" style="position:absolute;left:0;top:0"><path d="M4.5 10 L8 6 L11.5 10 Z" fill="#404040"/></svg><div class="thumb" style="left:1px;top:18px;width:14px;height:78px"><i style="top:35px"></i><i style="top:38px"></i><i style="top:41px"></i></div><svg width="16" height="17" style="position:absolute;left:0;bottom:0"><path d="M4.5 7 L8 11 L11.5 7 Z" fill="#404040"/></svg></div>
</div>
<div style="left:9px;top:705px;width:414px;height:2px;background:#aaa4a2"></div>
<div style="left:9px;top:707px;width:414px;height:3px;background:linear-gradient(#2f78de,#3f86e6 60%,#8ab8f2)"></div>
<div class="page" style="left:9px;top:731px;width:413px;height:89.5px;"></div>
<div class="tab" style="left:87px;top:713.5px;width:122px;height:17.5px;"><span class="t" style="left:3.25px;top:2.69px;font-size:11px;line-height:11px;transform:scaleX(0.994);transform-origin:0 0;">Автограббер номеров</span></div>
<div class="tab" style="left:209px;top:713.5px;width:140px;height:17.5px;"><span class="t" style="left:5.400000000000006px;top:2.69px;font-size:11px;line-height:11px;transform:scaleX(1.012);transform-origin:0 0;">Настройки автограббера</span></div>
<div class="tab" style="left:349px;top:713.5px;width:40px;height:17.5px;"><span class="t" style="left:5.399999999999977px;top:2.69px;font-size:11px;line-height:11px;transform:scaleX(0.959);transform-origin:0 0;">Бот</span></div>
<div class="tab sel" style="left:9px;top:711px;width:78px;height:21.5px;"><span class="t" style="left:7.5px;top:4.19px;font-size:11px;line-height:11px;transform:scaleX(0.960);transform-origin:0 0;">Ручной ввод</span></div>
<div class="nc" style="left:14px;top:766px"><b></b><i style="background:#00e040"></i><span class="t" style="left:0px;width:25px;text-align:center;top:5.50px;font-size:15px;line-height:15px;transform:scaleX(0.695);transform-origin:50% 0;color:#ffff00">0</span></div>
<div class="nc" style="left:41px;top:739px"><b></b><i style="background:#ff0000"></i><span class="t" style="left:0px;width:25px;text-align:center;top:5.50px;font-size:15px;line-height:15px;transform:scaleX(0.695);transform-origin:50% 0;color:#ffff00">3</span></div>
<div class="nc" style="left:41px;top:766px"><b></b><i style="background:#000000"></i><span class="t" style="left:0px;width:25px;text-align:center;top:5.50px;font-size:15px;line-height:15px;transform:scaleX(0.695);transform-origin:50% 0;color:#ffff00">2</span></div>
<div class="nc" style="left:41px;top:793px"><b></b><i style="background:#ff0000"></i><span class="t" style="left:0px;width:25px;text-align:center;top:5.50px;font-size:15px;line-height:15px;transform:scaleX(0.695);transform-origin:50% 0;color:#ffff00">1</span></div>
<div class="nc" style="left:68px;top:739px"><b></b><i style="background:#000000"></i><span class="t" style="left:0px;width:25px;text-align:center;top:5.50px;font-size:15px;line-height:15px;transform:scaleX(0.695);transform-origin:50% 0;color:#ffff00">6</span></div>
<div class="nc" style="left:68px;top:766px"><b></b><i style="background:#ff0000"></i><span class="t" style="left:0px;width:25px;text-align:center;top:5.50px;font-size:15px;line-height:15px;transform:scaleX(0.695);transform-origin:50% 0;color:#ffff00">5</span></div>
<div class="nc" style="left:68px;top:793px"><b></b><i style="background:#000000"></i><span class="t" style="left:0px;width:25px;text-align:center;top:5.50px;font-size:15px;line-height:15px;transform:scaleX(0.695);transform-origin:50% 0;color:#ffff00">4</span></div>
<div class="nc" style="left:95px;top:739px"><b></b><i style="background:#ff0000"></i><span class="t" style="left:0px;width:25px;text-align:center;top:5.50px;font-size:15px;line-height:15px;transform:scaleX(0.695);transform-origin:50% 0;color:#ffff00">9</span></div>
<div class="nc" style="left:95px;top:766px"><b></b><i style="background:#000000"></i><span class="t" style="left:0px;width:25px;text-align:center;top:5.50px;font-size:15px;line-height:15px;transform:scaleX(0.695);transform-origin:50% 0;color:#ffff00">8</span></div>
<div class="nc" style="left:95px;top:793px"><b></b><i style="background:#ff0000"></i><span class="t" style="left:0px;width:25px;text-align:center;top:5.50px;font-size:15px;line-height:15px;transform:scaleX(0.695);transform-origin:50% 0;color:#ffff00">7</span></div>
<div class="nc" style="left:122px;top:739px"><b></b><i style="background:#ff0000"></i><span class="t" style="left:0px;width:25px;text-align:center;top:5.50px;font-size:15px;line-height:15px;transform:scaleX(0.815);transform-origin:50% 0;color:#ffff00">12</span></div>
<div class="nc" style="left:122px;top:766px"><b></b><i style="background:#000000"></i><span class="t" style="left:0px;width:25px;text-align:center;top:5.50px;font-size:15px;line-height:15px;transform:scaleX(0.873);transform-origin:50% 0;color:#ffff00">11</span></div>
<div class="nc" style="left:122px;top:793px"><b></b><i style="background:#000000"></i><span class="t" style="left:0px;width:25px;text-align:center;top:5.50px;font-size:15px;line-height:15px;transform:scaleX(0.815);transform-origin:50% 0;color:#ffff00">10</span></div>
<div class="nc" style="left:149px;top:739px"><b></b><i style="background:#000000"></i><span class="t" style="left:0px;width:25px;text-align:center;top:5.50px;font-size:15px;line-height:15px;transform:scaleX(0.815);transform-origin:50% 0;color:#ffff00">15</span></div>
<div class="nc" style="left:149px;top:766px"><b></b><i style="background:#ff0000"></i><span class="t" style="left:0px;width:25px;text-align:center;top:5.50px;font-size:15px;line-height:15px;transform:scaleX(0.815);transform-origin:50% 0;color:#ffff00">14</span></div>
<div class="nc" style="left:149px;top:793px"><b></b><i style="background:#000000"></i><span class="t" style="left:0px;width:25px;text-align:center;top:5.50px;font-size:15px;line-height:15px;transform:scaleX(0.815);transform-origin:50% 0;color:#ffff00">13</span></div>
<div class="nc" style="left:176px;top:739px"><b></b><i style="background:#ff0000"></i><span class="t" style="left:0px;width:25px;text-align:center;top:5.50px;font-size:15px;line-height:15px;transform:scaleX(0.815);transform-origin:50% 0;color:#ffff00">18</span></div>
<div class="nc" style="left:176px;top:766px"><b></b><i style="background:#000000"></i><span class="t" style="left:0px;width:25px;text-align:center;top:5.50px;font-size:15px;line-height:15px;transform:scaleX(0.815);transform-origin:50% 0;color:#ffff00">17</span></div>
<div class="nc" style="left:176px;top:793px"><b></b><i style="background:#ff0000"></i><span class="t" style="left:0px;width:25px;text-align:center;top:5.50px;font-size:15px;line-height:15px;transform:scaleX(0.815);transform-origin:50% 0;color:#ffff00">16</span></div>
<div class="nc" style="left:203px;top:739px"><b></b><i style="background:#ff0000"></i><span class="t" style="left:0px;width:25px;text-align:center;top:5.50px;font-size:15px;line-height:15px;transform:scaleX(0.815);transform-origin:50% 0;color:#ffff00">21</span></div>
<div class="nc" style="left:203px;top:766px"><b></b><i style="background:#000000"></i><span class="t" style="left:0px;width:25px;text-align:center;top:5.50px;font-size:15px;line-height:15px;transform:scaleX(0.815);transform-origin:50% 0;color:#ffff00">20</span></div>
<div class="nc" style="left:203px;top:793px"><b></b><i style="background:#ff0000"></i><span class="t" style="left:0px;width:25px;text-align:center;top:5.50px;font-size:15px;line-height:15px;transform:scaleX(0.815);transform-origin:50% 0;color:#ffff00">19</span></div>
<div class="nc" style="left:230px;top:739px"><b></b><i style="background:#000000"></i><span class="t" style="left:0px;width:25px;text-align:center;top:5.50px;font-size:15px;line-height:15px;transform:scaleX(0.815);transform-origin:50% 0;color:#ffff00">24</span></div>
<div class="nc" style="left:230px;top:766px"><b></b><i style="background:#ff0000"></i><span class="t" style="left:0px;width:25px;text-align:center;top:5.50px;font-size:15px;line-height:15px;transform:scaleX(0.815);transform-origin:50% 0;color:#ffff00">23</span></div>
<div class="nc" style="left:230px;top:793px"><b></b><i style="background:#000000"></i><span class="t" style="left:0px;width:25px;text-align:center;top:5.50px;font-size:15px;line-height:15px;transform:scaleX(0.815);transform-origin:50% 0;color:#ffff00">22</span></div>
<div class="nc" style="left:257px;top:739px"><b></b><i style="background:#ff0000"></i><span class="t" style="left:0px;width:25px;text-align:center;top:5.50px;font-size:15px;line-height:15px;transform:scaleX(0.815);transform-origin:50% 0;color:#ffff00">27</span></div>
<div class="nc" style="left:257px;top:766px"><b></b><i style="background:#000000"></i><span class="t" style="left:0px;width:25px;text-align:center;top:5.50px;font-size:15px;line-height:15px;transform:scaleX(0.815);transform-origin:50% 0;color:#ffff00">26</span></div>
<div class="nc" style="left:257px;top:793px"><b></b><i style="background:#ff0000"></i><span class="t" style="left:0px;width:25px;text-align:center;top:5.50px;font-size:15px;line-height:15px;transform:scaleX(0.815);transform-origin:50% 0;color:#ffff00">25</span></div>
<div class="nc" style="left:284px;top:739px"><b></b><i style="background:#ff0000"></i><span class="t" style="left:0px;width:25px;text-align:center;top:5.50px;font-size:15px;line-height:15px;transform:scaleX(0.815);transform-origin:50% 0;color:#ffff00">30</span></div>
<div class="nc" style="left:284px;top:766px"><b></b><i style="background:#000000"></i><span class="t" style="left:0px;width:25px;text-align:center;top:5.50px;font-size:15px;line-height:15px;transform:scaleX(0.815);transform-origin:50% 0;color:#ffff00">29</span></div>
<div class="nc" style="left:284px;top:793px"><b></b><i style="background:#000000"></i><span class="t" style="left:0px;width:25px;text-align:center;top:5.50px;font-size:15px;line-height:15px;transform:scaleX(0.815);transform-origin:50% 0;color:#ffff00">28</span></div>
<div class="nc" style="left:311px;top:739px"><b></b><i style="background:#000000"></i><span class="t" style="left:0px;width:25px;text-align:center;top:5.50px;font-size:15px;line-height:15px;transform:scaleX(0.815);transform-origin:50% 0;color:#ffff00">33</span></div>
<div class="nc" style="left:311px;top:766px"><b></b><i style="background:#ff0000"></i><span class="t" style="left:0px;width:25px;text-align:center;top:5.50px;font-size:15px;line-height:15px;transform:scaleX(0.815);transform-origin:50% 0;color:#ffff00">32</span></div>
<div class="nc" style="left:311px;top:793px"><b></b><i style="background:#000000"></i><span class="t" style="left:0px;width:25px;text-align:center;top:5.50px;font-size:15px;line-height:15px;transform:scaleX(0.815);transform-origin:50% 0;color:#ffff00">31</span></div>
<div class="nc" style="left:338px;top:739px"><b></b><i style="background:#ff0000"></i><span class="t" style="left:0px;width:25px;text-align:center;top:5.50px;font-size:15px;line-height:15px;transform:scaleX(0.815);transform-origin:50% 0;color:#ffff00">36</span></div>
<div class="nc" style="left:338px;top:766px"><b></b><i style="background:#000000"></i><span class="t" style="left:0px;width:25px;text-align:center;top:5.50px;font-size:15px;line-height:15px;transform:scaleX(0.815);transform-origin:50% 0;color:#ffff00">35</span></div>
<div class="nc" style="left:338px;top:793px"><b></b><i style="background:#ff0000"></i><span class="t" style="left:0px;width:25px;text-align:center;top:5.50px;font-size:15px;line-height:15px;transform:scaleX(0.815);transform-origin:50% 0;color:#ffff00">34</span></div>
<div style="left:423px;top:30px;width:2px;height:794px;background:linear-gradient(90deg,#9a9a9a,#c8c8c8)"></div>
<div style="left:425px;top:30px;width:559px;height:630px;background:#f0f0f0"></div>
<div style="left:425px;top:651px;width:559px;height:8px;background:#fafafa"></div>
<div style="left:425px;top:653.5px;width:558px;height:1px;background:#a0a0a0"></div>
<div style="left:425px;top:659px;width:558px;height:1px;background:#b4b4b4"></div>
<div style="left:982.5px;top:30px;width:1.5px;height:794px;background:#a0a0a0"></div>
<div style="left:427px;top:52px;width:553px;height:599.5px;border:1px solid #8e9097;box-sizing:border-box;background:#fff"></div>
<div class="tab" style="left:429.5px;top:35px;width:71px;height:17px;"><span class="t" style="left:4.5px;top:2.44px;font-size:11px;line-height:11px;transform:scaleX(0.997);transform-origin:0 0;">Анализатор</span></div>
<div class="tab" style="left:500.5px;top:35px;width:70px;height:17px;"><span class="t" style="left:5.5px;top:2.44px;font-size:11px;line-height:11px;transform:scaleX(1.029);transform-origin:0 0;">Автоставки</span></div>
<div class="tab" style="left:628px;top:35px;width:130.5px;height:17px;"><span class="t" style="left:5.5px;top:2.44px;font-size:11px;line-height:11px;transform:scaleX(0.994);transform-origin:0 0;">Функционал PsevdoMS</span></div>
<div class="tab" style="left:759px;top:35px;width:117px;height:17px;"><span class="t" style="left:6px;top:2.44px;font-size:11px;line-height:11px;transform:scaleX(1.001);transform-origin:0 0;">Контроль банкролла</span></div>
<div class="tab" style="left:876.5px;top:35px;width:80px;height:17px;"><span class="t" style="left:5.0px;top:2.44px;font-size:11px;line-height:11px;transform:scaleX(0.974);transform-origin:0 0;">Колесо рулетки</span></div>
<div style="left:948px;top:33px;width:34px;height:19px;background:#f0f0f0"></div>
<div class="tab sel" style="left:570.5px;top:32px;width:58px;height:21px;"><span class="t" style="left:7.0px;top:3.69px;font-size:11px;line-height:11px;transform:scaleX(1.031);transform-origin:0 0;">Частоты</span></div>
<div class="sbtn" style="left:950px;top:34.5px;width:14.5px;height:15px;"><svg width="13" height="13" style="position:absolute;left:0;top:0"><path d="M8.3 3.5 L5 6.7 L8.3 9.9 Z" fill="#3a5ac8"/></svg></div>
<div class="sbtn" style="left:965.5px;top:34.5px;width:15px;height:15px;"><svg width="13" height="13" style="position:absolute;left:0;top:0"><path d="M5.2 3.5 L8.5 6.7 L5.2 9.9 Z" fill="#3a5ac8"/></svg></div>
<div style="left:431px;top:56.5px;width:545px;height:590.5px;background:#f0f0f0;border:1px solid #8f8f8f;box-sizing:border-box;box-shadow:inset 1px 1px 0 #fff"></div>
<div style="left:434px;top:79px;width:539px;height:565.5px;border:1px solid #8f9299;box-sizing:border-box;background:#fff"></div>
<div class="tab" style="left:436.5px;top:62px;width:54px;height:17px;"><span class="t" style="left:5.0px;top:3.19px;font-size:11px;line-height:11px;transform:scaleX(0.975);transform-origin:0 0;">По полю</span></div>
<div class="tab" style="left:492px;top:62px;width:63px;height:17px;"><span class="t" style="left:4.5px;top:3.19px;font-size:11px;line-height:11px;transform:scaleX(0.985);transform-origin:0 0;">По числам</span></div>
<div class="tab" style="left:677px;top:62px;width:91px;height:17px;"><span class="t" style="left:4.5px;top:3.19px;font-size:11px;line-height:11px;transform:scaleX(1.015);transform-origin:0 0;">Тепловая карта</span></div>
<div class="tab sel" style="left:555px;top:59px;width:122px;height:21px;"><span class="t" style="left:7.5px;top:3.19px;font-size:11px;line-height:11px;transform:scaleX(1.048);transform-origin:0 0;">По шансам/дюж/кол</span></div>
<div style="left:438px;top:103px;width:533px;height:539px;border-right:1px solid #a8a8a8;border-bottom:1px solid #a8a8a8;box-sizing:border-box"></div>
<div style="left:435px;top:80px;width:537px;height:24px;background:#fff"></div>
<span class="t" style="left:440.5px;top:83.86px;font-size:17px;line-height:17px;transform:scaleX(1.078);transform-origin:0 0;">Частоты шансов, дюжин, колонок, секторов и пр.</span>
<div id="rgrid" style="left:440px;top:105px;width:529px;height:534px">
<div class="h" style="left:0px;top:0px;width:80px;height:22px;"><span class="t" style="left:0px;width:79px;text-align:center;top:5.27px;font-size:11.5px;line-height:11.5px;font-weight:bold">Параметр</span></div>
<div class="h" style="left:80px;top:0px;width:84px;height:22px;"><span class="t" style="left:0px;width:83px;text-align:center;top:5.27px;font-size:11.5px;line-height:11.5px;font-weight:bold">Вероятность</span></div>
<div class="h" style="left:164px;top:0px;width:73px;height:22px;"><span class="t" style="left:0px;width:72px;text-align:center;top:5.27px;font-size:11.5px;line-height:11.5px;font-weight:bold">Частота</span></div>
<div class="h" style="left:237px;top:0px;width:114px;height:22px;"><span class="t" style="left:0px;width:113px;text-align:center;top:5.27px;font-size:11.5px;line-height:11.5px;font-weight:bold">Графически</span></div>
<div class="h" style="left:351px;top:0px;width:61px;height:22px;"><span class="t" style="left:0px;width:60px;text-align:center;top:5.27px;font-size:11.5px;line-height:11.5px;font-weight:bold">Кол-во</span></div>
<div class="h" style="left:0px;top:22px;width:80px;height:22px;"><span class="t" style="left:0px;width:79px;text-align:center;top:5.27px;font-size:11.5px;line-height:11.5px;font-weight:bold">Zero</span></div>
<div class="d" style="left:80px;top:22px;width:84px;height:22px;background:#b0c8ec"><span class="t" style="left:0px;width:83px;text-align:center;top:4.69px;font-size:11px;line-height:11px;">0.027</span></div>
<div class="d" style="left:164px;top:22px;width:73px;height:22px;"><span class="t" style="left:0px;width:72px;text-align:center;top:4.69px;font-size:11px;line-height:11px;">0,0188</span></div>
<div class="d" style="left:237px;top:22px;width:114px;height:22px;"><div class="bar" style="left:3px;top:3px;width:108px;height:16px"><span class="t bt" style="color:#0000ff">1,8779%</span><div class="fill" style="width:2px;background:#008000"><span class="t bt" style="color:#000">1,8779%</span></div></div></div>
<div class="d" style="left:351px;top:22px;width:61px;height:22px;"><span class="t" style="left:0px;width:60px;text-align:center;top:4.69px;font-size:11px;line-height:11px;">4</span></div>
<div class="h" style="left:0px;top:44px;width:80px;height:22px;"><span class="t" style="left:0px;width:79px;text-align:center;top:5.27px;font-size:11.5px;line-height:11.5px;font-weight:bold">Черное</span></div>
<div class="d" style="left:80px;top:44px;width:84px;height:22px;"><span class="t" style="left:0px;width:83px;text-align:center;top:4.69px;font-size:11px;line-height:11px;">0.486</span></div>
<div class="d" style="left:164px;top:44px;width:73px;height:22px;"><span class="t" style="left:0px;width:72px;text-align:center;top:4.69px;font-size:11px;line-height:11px;">0,516</span></div>
<div class="d" style="left:237px;top:44px;width:114px;height:22px;"><div class="bar" style="left:3px;top:3px;width:108px;height:16px"><span class="t bt" style="color:#0000ff">51,643%</span><div class="fill" style="width:55px;background:#cc0066"><span class="t bt" style="color:#ffff66">51,643%</span></div></div></div>
<div class="d" style="left:351px;top:44px;width:61px;height:22px;"><span class="t" style="left:0px;width:60px;text-align:center;top:4.69px;font-size:11px;line-height:11px;">110</span></div>
<div class="h" style="left:0px;top:66px;width:80px;height:22px;"><span class="t" style="left:0px;width:79px;text-align:center;top:5.27px;font-size:11.5px;line-height:11.5px;font-weight:bold">Красное</span></div>
<div class="d" style="left:80px;top:66px;width:84px;height:22px;"><span class="t" style="left:0px;width:83px;text-align:center;top:4.69px;font-size:11px;line-height:11px;">0.486</span></div>
<div class="d" style="left:164px;top:66px;width:73px;height:22px;"><span class="t" style="left:0px;width:72px;text-align:center;top:4.69px;font-size:11px;line-height:11px;">0,465</span></div>
<div class="d" style="left:237px;top:66px;width:114px;height:22px;"><div class="bar" style="left:3px;top:3px;width:108px;height:16px"><span class="t bt" style="color:#0000ff">46,479%</span><div class="fill" style="width:49px;background:#000000"><span class="t bt" style="color:#ffff66">46,479%</span></div></div></div>
<div class="d" style="left:351px;top:66px;width:61px;height:22px;"><span class="t" style="left:0px;width:60px;text-align:center;top:4.69px;font-size:11px;line-height:11px;">99</span></div>
<div class="h sep" style="left:0px;top:88px;width:80px;height:4px;"></div>
<div class="d sep" style="left:80px;top:88px;width:84px;height:4px;"></div>
<div class="d sep" style="left:164px;top:88px;width:73px;height:4px;"></div>
<div class="d sep" style="left:237px;top:88px;width:114px;height:4px;"></div>
<div class="d sep" style="left:351px;top:88px;width:61px;height:4px;"></div>
<div class="h" style="left:0px;top:92px;width:80px;height:22px;"><span class="t" style="left:0px;width:79px;text-align:center;top:5.27px;font-size:11.5px;line-height:11.5px;font-weight:bold">Четное</span></div>
<div class="d" style="left:80px;top:92px;width:84px;height:22px;"><span class="t" style="left:0px;width:83px;text-align:center;top:4.69px;font-size:11px;line-height:11px;">0.486</span></div>
<div class="d" style="left:164px;top:92px;width:73px;height:22px;"><span class="t" style="left:0px;width:72px;text-align:center;top:4.69px;font-size:11px;line-height:11px;">0,455</span></div>
<div class="d" style="left:237px;top:92px;width:114px;height:22px;"><div class="bar" style="left:3px;top:3px;width:108px;height:16px"><span class="t bt" style="color:#0000ff">45,54%</span><div class="fill" style="width:48px;background:#ffff99"><span class="t bt" style="color:#000">45,54%</span></div></div></div>
<div class="d" style="left:351px;top:92px;width:61px;height:22px;"><span class="t" style="left:0px;width:60px;text-align:center;top:4.69px;font-size:11px;line-height:11px;">97</span></div>
<div class="h" style="left:0px;top:114px;width:80px;height:22px;"><span class="t" style="left:0px;width:79px;text-align:center;top:5.27px;font-size:11.5px;line-height:11.5px;font-weight:bold">Нечетное</span></div>
<div class="d" style="left:80px;top:114px;width:84px;height:22px;"><span class="t" style="left:0px;width:83px;text-align:center;top:4.69px;font-size:11px;line-height:11px;">0.486</span></div>
<div class="d" style="left:164px;top:114px;width:73px;height:22px;"><span class="t" style="left:0px;width:72px;text-align:center;top:4.69px;font-size:11px;line-height:11px;">0,526</span></div>
<div class="d" style="left:237px;top:114px;width:114px;height:22px;"><div class="bar" style="left:3px;top:3px;width:108px;height:16px"><span class="t bt" style="color:#0000ff">52,582%</span><div class="fill" style="width:56px;background:#66f033"><span class="t bt" style="color:#000">52,582%</span></div></div></div>
<div class="d" style="left:351px;top:114px;width:61px;height:22px;"><span class="t" style="left:0px;width:60px;text-align:center;top:4.69px;font-size:11px;line-height:11px;">112</span></div>
<div class="h sep" style="left:0px;top:136px;width:80px;height:5px;"></div>
<div class="d sep" style="left:80px;top:136px;width:84px;height:5px;"></div>
<div class="d sep" style="left:164px;top:136px;width:73px;height:5px;"></div>
<div class="d sep" style="left:237px;top:136px;width:114px;height:5px;"></div>
<div class="d sep" style="left:351px;top:136px;width:61px;height:5px;"></div>
<div class="h" style="left:0px;top:141px;width:80px;height:22px;"><span class="t" style="left:0px;width:79px;text-align:center;top:5.27px;font-size:11.5px;line-height:11.5px;font-weight:bold">Малое</span></div>
<div class="d" style="left:80px;top:141px;width:84px;height:22px;"><span class="t" style="left:0px;width:83px;text-align:center;top:4.69px;font-size:11px;line-height:11px;">0.486</span></div>
<div class="d" style="left:164px;top:141px;width:73px;height:22px;"><span class="t" style="left:0px;width:72px;text-align:center;top:4.69px;font-size:11px;line-height:11px;">0,493</span></div>
<div class="d" style="left:237px;top:141px;width:114px;height:22px;"><div class="bar" style="left:3px;top:3px;width:108px;height:16px"><span class="t bt" style="color:#0000ff">49,296%</span><div class="fill" style="width:52px;background:#99ffcc"><span class="t bt" style="color:#000">49,296%</span></div></div></div>
<div class="d" style="left:351px;top:141px;width:61px;height:22px;"><span class="t" style="left:0px;width:60px;text-align:center;top:4.69px;font-size:11px;line-height:11px;">105</span></div>
<div class="h" style="left:0px;top:163px;width:80px;height:22px;"><span class="t" style="left:0px;width:79px;text-align:center;top:5.27px;font-size:11.5px;line-height:11.5px;font-weight:bold">Большое</span></div>
<div class="d" style="left:80px;top:163px;width:84px;height:22px;"><span class="t" style="left:0px;width:83px;text-align:center;top:4.69px;font-size:11px;line-height:11px;">0.486</span></div>
<div class="d" style="left:164px;top:163px;width:73px;height:22px;"><span class="t" style="left:0px;width:72px;text-align:center;top:4.69px;font-size:11px;line-height:11px;">0,488</span></div>
<div class="d" style="left:237px;top:163px;width:114px;height:22px;"><div class="bar" style="left:3px;top:3px;width:108px;height:16px"><span class="t bt" style="color:#0000ff">48,826%</span><div class="fill" style="width:52px;background:#ff9966"><span class="t bt" style="color:#000">48,826%</span></div></div></div>
<div class="d" style="left:351px;top:163px;width:61px;height:22px;"><span class="t" style="left:0px;width:60px;text-align:center;top:4.69px;font-size:11px;line-height:11px;">104</span></div>
<div class="h sep" style="left:0px;top:185px;width:80px;height:5px;"></div>
<div class="d sep" style="left:80px;top:185px;width:84px;height:5px;"></div>
<div class="d sep" style="left:164px;top:185px;width:73px;height:5px;"></div>
<div class="d sep" style="left:237px;top:185px;width:114px;height:5px;"></div>
<div class="d sep" style="left:351px;top:185px;width:61px;height:5px;"></div>
<div class="h" style="left:0px;top:190px;width:80px;height:22px;"><span class="t" style="left:0px;width:79px;text-align:center;top:5.27px;font-size:11.5px;line-height:11.5px;font-weight:bold">Дюжины</span></div>
<div class="d" style="left:80px;top:190px;width:84px;height:22px;"></div>
<div class="d" style="left:164px;top:190px;width:73px;height:22px;"></div>
<div class="d" style="left:237px;top:190px;width:114px;height:22px;"></div>
<div class="d" style="left:351px;top:190px;width:61px;height:22px;"></div>
<div class="h" style="left:0px;top:212px;width:80px;height:22px;"><span class="t" style="left:0px;width:79px;text-align:center;top:5.27px;font-size:11.5px;line-height:11.5px;font-weight:bold">1 Дюжина</span></div>
<div class="d" style="left:80px;top:212px;width:84px;height:22px;"><span class="t" style="left:0px;width:83px;text-align:center;top:4.69px;font-size:11px;line-height:11px;">0.324</span></div>
<div class="d" style="left:164px;top:212px;width:73px;height:22px;"><span class="t" style="left:0px;width:72px;text-align:center;top:4.69px;font-size:11px;line-height:11px;">0,31</span></div>
<div class="d" style="left:237px;top:212px;width:114px;height:22px;"><div class="bar" style="left:3px;top:3px;width:108px;height:16px"><span class="t bt" style="color:#0000ff">30,986%</span><div class="fill" style="width:33px;background:#33ccff"><span class="t bt" style="color:#000">30,986%</span></div></div></div>
<div class="d" style="left:351px;top:212px;width:61px;height:22px;"><span class="t" style="left:0px;width:60px;text-align:center;top:4.69px;font-size:11px;line-height:11px;">66</span></div>
<div class="h" style="left:0px;top:234px;width:80px;height:22px;"><span class="t" style="left:0px;width:79px;text-align:center;top:5.27px;font-size:11.5px;line-height:11.5px;font-weight:bold">2 Дюжина</span></div>
<div class="d" style="left:80px;top:234px;width:84px;height:22px;"><span class="t" style="left:0px;width:83px;text-align:center;top:4.69px;font-size:11px;line-height:11px;">0.324</span></div>
<div class="d" style="left:164px;top:234px;width:73px;height:22px;"><span class="t" style="left:0px;width:72px;text-align:center;top:4.69px;font-size:11px;line-height:11px;">0,357</span></div>
<div class="d" style="left:237px;top:234px;width:114px;height:22px;"><div class="bar" style="left:3px;top:3px;width:108px;height:16px"><span class="t bt" style="color:#0000ff">35,681%</span><div class="fill" style="width:38px;background:#ffff00"><span class="t bt" style="color:#000">35,681%</span></div></div></div>
<div class="d" style="left:351px;top:234px;width:61px;height:22px;"><span class="t" style="left:0px;width:60px;text-align:center;top:4.69px;font-size:11px;line-height:11px;">76</span></div>
<div class="h" style="left:0px;top:256px;width:80px;height:22px;"><span class="t" style="left:0px;width:79px;text-align:center;top:5.27px;font-size:11.5px;line-height:11.5px;font-weight:bold">3 Дюжина</span></div>
<div class="d" style="left:80px;top:256px;width:84px;height:22px;"><span class="t" style="left:0px;width:83px;text-align:center;top:4.69px;font-size:11px;line-height:11px;">0.324</span></div>
<div class="d" style="left:164px;top:256px;width:73px;height:22px;"><span class="t" style="left:0px;width:72px;text-align:center;top:4.69px;font-size:11px;line-height:11px;">0,315</span></div>
<div class="d" style="left:237px;top:256px;width:114px;height:22px;"><div class="bar" style="left:3px;top:3px;width:108px;height:16px"><span class="t bt" style="color:#0000ff">31,455%</span><div class="fill" style="width:33px;background:#ff66ff"><span class="t bt" style="color:#000">31,455%</span></div></div></div>
<div class="d" style="left:351px;top:256px;width:61px;height:22px;"><span class="t" style="left:0px;width:60px;text-align:center;top:4.69px;font-size:11px;line-height:11px;">67</span></div>
<div class="h sep" style="left:0px;top:278px;width:80px;height:4px;"></div>
<div class="d sep" style="left:80px;top:278px;width:84px;height:4px;"></div>
<div class="d sep" style="left:164px;top:278px;width:73px;height:4px;"></div>
<div class="d sep" style="left:237px;top:278px;width:114px;height:4px;"></div>
<div class="d sep" style="left:351px;top:278px;width:61px;height:4px;"></div>
<div class="h" style="left:0px;top:282px;width:80px;height:22px;"><span class="t" style="left:0px;width:79px;text-align:center;top:5.27px;font-size:11.5px;line-height:11.5px;font-weight:bold">Колонки</span></div>
<div class="d" style="left:80px;top:282px;width:84px;height:22px;"></div>
<div class="d" style="left:164px;top:282px;width:73px;height:22px;"></div>
<div class="d" style="left:237px;top:282px;width:114px;height:22px;"></div>
<div class="d" style="left:351px;top:282px;width:61px;height:22px;"></div>
<div class="h" style="left:0px;top:304px;width:80px;height:22px;"><span class="t" style="left:0px;width:79px;text-align:center;top:5.27px;font-size:11.5px;line-height:11.5px;font-weight:bold">1 Колонка</span></div>
<div class="d" style="left:80px;top:304px;width:84px;height:22px;"><span class="t" style="left:0px;width:83px;text-align:center;top:4.69px;font-size:11px;line-height:11px;">0.324</span></div>
<div class="d" style="left:164px;top:304px;width:73px;height:22px;"><span class="t" style="left:0px;width:72px;text-align:center;top:4.69px;font-size:11px;line-height:11px;">0,277</span></div>
<div class="d" style="left:237px;top:304px;width:114px;height:22px;"><div class="bar" style="left:3px;top:3px;width:108px;height:16px"><span class="t bt" style="color:#0000ff">27,7%</span><div class="fill" style="width:29px;background:#ff00ff"><span class="t bt" style="color:#000">27,7%</span></div></div></div>
<div class="d" style="left:351px;top:304px;width:61px;height:22px;"><span class="t" style="left:0px;width:60px;text-align:center;top:4.69px;font-size:11px;line-height:11px;">59</span></div>
<div class="h" style="left:0px;top:326px;width:80px;height:22px;"><span class="t" style="left:0px;width:79px;text-align:center;top:5.27px;font-size:11.5px;line-height:11.5px;font-weight:bold">2 Колонка</span></div>
<div class="d" style="left:80px;top:326px;width:84px;height:22px;"><span class="t" style="left:0px;width:83px;text-align:center;top:4.69px;font-size:11px;line-height:11px;">0.324</span></div>
<div class="d" style="left:164px;top:326px;width:73px;height:22px;"><span class="t" style="left:0px;width:72px;text-align:center;top:4.69px;font-size:11px;line-height:11px;">0,343</span></div>
<div class="d" style="left:237px;top:326px;width:114px;height:22px;"><div class="bar" style="left:3px;top:3px;width:108px;height:16px"><span class="t bt" style="color:#0000ff">34,272%</span><div class="fill" style="width:36px;background:#00ee00"><span class="t bt" style="color:#000">34,272%</span></div></div></div>
<div class="d" style="left:351px;top:326px;width:61px;height:22px;"><span class="t" style="left:0px;width:60px;text-align:center;top:4.69px;font-size:11px;line-height:11px;">73</span></div>
<div class="h" style="left:0px;top:348px;width:80px;height:22px;"><span class="t" style="left:0px;width:79px;text-align:center;top:5.27px;font-size:11.5px;line-height:11.5px;font-weight:bold">3 Колонка</span></div>
<div class="d" style="left:80px;top:348px;width:84px;height:22px;"><span class="t" style="left:0px;width:83px;text-align:center;top:4.69px;font-size:11px;line-height:11px;">0.324</span></div>
<div class="d" style="left:164px;top:348px;width:73px;height:22px;"><span class="t" style="left:0px;width:72px;text-align:center;top:4.69px;font-size:11px;line-height:11px;">0,362</span></div>
<div class="d" style="left:237px;top:348px;width:114px;height:22px;"><div class="bar" style="left:3px;top:3px;width:108px;height:16px"><span class="t bt" style="color:#0000ff">36,15%</span><div class="fill" style="width:38px;background:#ffff00"><span class="t bt" style="color:#000">36,15%</span></div></div></div>
<div class="d" style="left:351px;top:348px;width:61px;height:22px;"><span class="t" style="left:0px;width:60px;text-align:center;top:4.69px;font-size:11px;line-height:11px;">77</span></div>
<div class="h sep" style="left:0px;top:370px;width:80px;height:4px;"></div>
<div class="d sep" style="left:80px;top:370px;width:84px;height:4px;"></div>
<div class="d sep" style="left:164px;top:370px;width:73px;height:4px;"></div>
<div class="d sep" style="left:237px;top:370px;width:114px;height:4px;"></div>
<div class="d sep" style="left:351px;top:370px;width:61px;height:4px;"></div>
<div class="h" style="left:0px;top:374px;width:80px;height:22px;"><span class="t" style="left:0px;width:79px;text-align:center;top:5.27px;font-size:11.5px;line-height:11.5px;font-weight:bold">Сектора</span></div>
<div class="d" style="left:80px;top:374px;width:84px;height:22px;"></div>
<div class="d" style="left:164px;top:374px;width:73px;height:22px;"></div>
<div class="d" style="left:237px;top:374px;width:114px;height:22px;"></div>
<div class="d" style="left:351px;top:374px;width:61px;height:22px;"></div>
<div class="h" style="left:0px;top:396px;width:80px;height:22px;"><span class="t" style="left:0px;width:79px;text-align:center;top:5.27px;font-size:11.5px;line-height:11.5px;font-weight:bold">VdZ</span></div>
<div class="d" style="left:80px;top:396px;width:84px;height:22px;"><span class="t" style="left:0px;width:83px;text-align:center;top:4.69px;font-size:11px;line-height:11px;">0.459</span></div>
<div class="d" style="left:164px;top:396px;width:73px;height:22px;"><span class="t" style="left:0px;width:72px;text-align:center;top:4.69px;font-size:11px;line-height:11px;">0,469</span></div>
<div class="d" style="left:237px;top:396px;width:114px;height:22px;"><div class="bar" style="left:3px;top:3px;width:108px;height:16px"><span class="t bt" style="color:#0000ff">46,948%</span><div class="fill" style="width:50px;background:#66f033"><span class="t bt" style="color:#000">46,948%</span></div></div></div>
<div class="d" style="left:351px;top:396px;width:61px;height:22px;"><span class="t" style="left:0px;width:60px;text-align:center;top:4.69px;font-size:11px;line-height:11px;">100</span></div>
<div class="h" style="left:0px;top:418px;width:80px;height:22px;"><span class="t" style="left:0px;width:79px;text-align:center;top:5.27px;font-size:11.5px;line-height:11.5px;font-weight:bold">Orph</span></div>
<div class="d" style="left:80px;top:418px;width:84px;height:22px;"><span class="t" style="left:0px;width:83px;text-align:center;top:4.69px;font-size:11px;line-height:11px;">0.216</span></div>
<div class="d" style="left:164px;top:418px;width:73px;height:22px;"><span class="t" style="left:0px;width:72px;text-align:center;top:4.69px;font-size:11px;line-height:11px;">0,235</span></div>
<div class="d" style="left:237px;top:418px;width:114px;height:22px;"><div class="bar" style="left:3px;top:3px;width:108px;height:16px"><span class="t bt" style="color:#0000ff">23,474%</span><div class="fill" style="width:25px;background:#ff9966"><span class="t bt" style="color:#000">23,474%</span></div></div></div>
<div class="d" style="left:351px;top:418px;width:61px;height:22px;"><span class="t" style="left:0px;width:60px;text-align:center;top:4.69px;font-size:11px;line-height:11px;">50</span></div>
<div class="h" style="left:0px;top:440px;width:80px;height:22px;"><span class="t" style="left:0px;width:79px;text-align:center;top:5.27px;font-size:11.5px;line-height:11.5px;font-weight:bold">Tier</span></div>
<div class="d" style="left:80px;top:440px;width:84px;height:22px;"><span class="t" style="left:0px;width:83px;text-align:center;top:4.69px;font-size:11px;line-height:11px;">0.324</span></div>
<div class="d" style="left:164px;top:440px;width:73px;height:22px;"><span class="t" style="left:0px;width:72px;text-align:center;top:4.69px;font-size:11px;line-height:11px;">0,296</span></div>
<div class="d" style="left:237px;top:440px;width:114px;height:22px;"><div class="bar" style="left:3px;top:3px;width:108px;height:16px"><span class="t bt" style="color:#0000ff">29,577%</span><div class="fill" style="width:31px;background:#33ccff"><span class="t bt" style="color:#000">29,577%</span></div></div></div>
<div class="d" style="left:351px;top:440px;width:61px;height:22px;"><span class="t" style="left:0px;width:60px;text-align:center;top:4.69px;font-size:11px;line-height:11px;">63</span></div>
<div class="h sep" style="left:0px;top:462px;width:80px;height:5px;"></div>
<div class="d sep" style="left:80px;top:462px;width:84px;height:5px;"></div>
<div class="d sep" style="left:164px;top:462px;width:73px;height:5px;"></div>
<div class="d sep" style="left:237px;top:462px;width:114px;height:5px;"></div>
<div class="d sep" style="left:351px;top:462px;width:61px;height:5px;"></div>
<div class="h" style="left:0px;top:467px;width:80px;height:22px;"><span class="t" style="left:0px;width:79px;text-align:center;top:5.27px;font-size:11.5px;line-height:11.5px;font-weight:bold">Vdz_zch</span></div>
<div class="d" style="left:80px;top:467px;width:84px;height:22px;"><span class="t" style="left:0px;width:83px;text-align:center;top:4.69px;font-size:11px;line-height:11px;">0.324</span></div>
<div class="d" style="left:164px;top:467px;width:73px;height:22px;"><span class="t" style="left:0px;width:72px;text-align:center;top:4.69px;font-size:11px;line-height:11px;">0,183</span></div>
<div class="d" style="left:237px;top:467px;width:114px;height:22px;"><div class="bar" style="left:3px;top:3px;width:108px;height:16px"><span class="t bt" style="color:#0000ff">18,31%</span><div class="fill" style="width:19px;background:#99ffcc"><span class="t bt" style="color:#000">18,31%</span></div></div></div>
<div class="d" style="left:351px;top:467px;width:61px;height:22px;"><span class="t" style="left:0px;width:60px;text-align:center;top:4.69px;font-size:11px;line-height:11px;">39</span></div>
<div class="h sep" style="left:0px;top:489px;width:80px;height:4px;"></div>
<div class="d sep" style="left:80px;top:489px;width:84px;height:4px;"></div>
<div class="d sep" style="left:164px;top:489px;width:73px;height:4px;"></div>
<div class="d sep" style="left:237px;top:489px;width:114px;height:4px;"></div>
<div class="d sep" style="left:351px;top:489px;width:61px;height:4px;"></div>
<div class="h" style="left:0px;top:493px;width:80px;height:22px;"><span class="t" style="left:0px;width:79px;text-align:center;top:5.27px;font-size:11.5px;line-height:11.5px;font-weight:bold">Сиклайны</span></div>
<div class="d" style="left:80px;top:493px;width:84px;height:22px;"></div>
<div class="d" style="left:164px;top:493px;width:73px;height:22px;"></div>
<div class="d" style="left:237px;top:493px;width:114px;height:22px;"></div>
<div class="d" style="left:351px;top:493px;width:61px;height:22px;"></div>
<div class="h" style="left:0px;top:515px;width:80px;height:22px;"><span class="t" style="left:0px;width:79px;text-align:center;top:5.27px;font-size:11.5px;line-height:11.5px;font-weight:bold">1six</span></div>
<div class="d" style="left:80px;top:515px;width:84px;height:22px;"><span class="t" style="left:0px;width:83px;text-align:center;top:4.69px;font-size:11px;line-height:11px;">0.162</span></div>
<div class="d" style="left:164px;top:515px;width:73px;height:22px;"><span class="t" style="left:0px;width:72px;text-align:center;top:4.69px;font-size:11px;line-height:11px;">0,183</span></div>
<div class="d" style="left:237px;top:515px;width:114px;height:22px;"><div class="bar" style="left:3px;top:3px;width:108px;height:16px"><span class="t bt" style="color:#0000ff">18,31%</span><div class="fill" style="width:19px;background:#33ccff"><span class="t bt" style="color:#000">18,31%</span></div></div></div>
<div class="d" style="left:351px;top:515px;width:61px;height:22px;"><span class="t" style="left:0px;width:60px;text-align:center;top:4.69px;font-size:11px;line-height:11px;">39</span></div>
<div class="vsb" style="left:511px;top:0px;width:16.5px;height:532px;background:#f0f0f0"><svg width="17" height="17" style="position:absolute;left:0;top:0"><path d="M5 10 L8.5 6 L12 10 Z" fill="#404040"/></svg><div class="thumb" style="left:1px;top:18px;width:15px;height:15px"></div><svg width="17" height="17" style="position:absolute;left:0;bottom:0"><path d="M5 7 L8.5 11 L12 7 Z" fill="#404040"/></svg></div>
</div>
<div class="page2" style="left:427px;top:683px;width:553px;height:135.5px;background:#fff"></div>
<div class="tab" style="left:429.5px;top:665.5px;width:72.5px;height:17.5px;"><span class="t" style="left:5.0px;top:3.19px;font-size:11px;line-height:11px;transform:scaleX(1.014);transform-origin:0 0;">Управление</span></div>
<div class="tab" style="left:503.5px;top:665.5px;width:40.5px;height:17.5px;"><span class="t" style="left:5.0px;top:3.19px;font-size:11px;line-height:11px;transform:scaleX(1.011);transform-origin:0 0;">MD5</span></div>
<div class="tab" style="left:545.5px;top:665.5px;width:41px;height:17.5px;"><span class="t" style="left:4.75px;top:3.19px;font-size:11px;line-height:11px;transform:scaleX(1.009);transform-origin:0 0;">Ряды</span></div>
<div class="tab" style="left:588px;top:665.5px;width:106px;height:17.5px;"><span class="t" style="left:4.7000000000000455px;top:3.19px;font-size:11px;line-height:11px;transform:scaleX(0.987);transform-origin:0 0;">Позиционирование</span></div>
<div class="tab" style="left:741px;top:665.5px;width:38px;height:17.5px;"><span class="t" style="left:3px;top:3.19px;font-size:11px;line-height:11px;transform:scaleX(1.051);transform-origin:0 0;">ts11</span></div>
<div class="tab sel" style="left:694.5px;top:663px;width:46.5px;height:21px;"><span class="t" style="left:7.7999999999999545px;top:4.69px;font-size:11px;line-height:11px;transform:scaleX(0.991);transform-origin:0 0;">ts12</span></div>
<svg id="chart" style="position:absolute;left:431px;top:687px" width="546" height="130" viewBox="431 687 546 130" font-family="Liberation Sans, sans-serif"><rect x="431" y="687" width="546" height="130" fill="#f4f4f4"/><rect x="449.5" y="689.5" width="523.0" height="111.0" fill="#eeeeee"/><path d="M450 798.5 H972.5" stroke="#6c6c6c" stroke-width="1" stroke-dasharray="3 2"/><path d="M446.5 798.5 H449.5" stroke="#000" stroke-width="1"/><text x="446.5" y="802.5" font-size="12" text-anchor="end" fill="#000" textLength="5.5" lengthAdjust="spacingAndGlyphs">2</text><path d="M450 774.5 H972.5" stroke="#6c6c6c" stroke-width="1" stroke-dasharray="3 2"/><path d="M446.5 774.5 H449.5" stroke="#000" stroke-width="1"/><text x="446.5" y="778.5" font-size="12" text-anchor="end" fill="#000" textLength="5.5" lengthAdjust="spacingAndGlyphs">4</text><path d="M450 751.5 H972.5" stroke="#6c6c6c" stroke-width="1" stroke-dasharray="3 2"/><path d="M446.5 751.5 H449.5" stroke="#000" stroke-width="1"/><text x="446.5" y="755.5" font-size="12" text-anchor="end" fill="#000" textLength="5.5" lengthAdjust="spacingAndGlyphs">6</text><path d="M450 727.5 H972.5" stroke="#6c6c6c" stroke-width="1" stroke-dasharray="3 2"/><path d="M446.5 727.5 H449.5" stroke="#000" stroke-width="1"/><text x="446.5" y="731.5" font-size="12" text-anchor="end" fill="#000" textLength="5.5" lengthAdjust="spacingAndGlyphs">8</text><path d="M450 704.5 H972.5" stroke="#6c6c6c" stroke-width="1" stroke-dasharray="3 2"/><path d="M446.5 704.5 H449.5" stroke="#000" stroke-width="1"/><text x="446.5" y="708.5" font-size="12" text-anchor="end" fill="#000" textLength="11" lengthAdjust="spacingAndGlyphs">10</text><path d="M459.5 690 V800" stroke="#707070" stroke-width="1" stroke-dasharray="1 2"/><text x="459.0" y="813" font-size="12" text-anchor="middle" fill="#000" textLength="5.5" lengthAdjust="spacingAndGlyphs">0</text><path d="M473.5 690 V800" stroke="#707070" stroke-width="1" stroke-dasharray="1 2"/><text x="473.0" y="813" font-size="12" text-anchor="middle" fill="#000" textLength="5.5" lengthAdjust="spacingAndGlyphs">1</text><path d="M487.5 690 V800" stroke="#707070" stroke-width="1" stroke-dasharray="1 2"/><text x="487.0" y="813" font-size="12" text-anchor="middle" fill="#000" textLength="5.5" lengthAdjust="spacingAndGlyphs">2</text><path d="M501.5 690 V800" stroke="#707070" stroke-width="1" stroke-dasharray="1 2"/><text x="501.0" y="813" font-size="12" text-anchor="middle" fill="#000" textLength="5.5" lengthAdjust="spacingAndGlyphs">3</text><path d="M515.5 690 V800" stroke="#707070" stroke-width="1" stroke-dasharray="1 2"/><text x="515.0" y="813" font-size="12" text-anchor="middle" fill="#000" textLength="5.5" lengthAdjust="spacingAndGlyphs">4</text><path d="M529.5 690 V800" stroke="#707070" stroke-width="1" stroke-dasharray="1 2"/><text x="529.0" y="813" font-size="12" text-anchor="middle" fill="#000" textLength="5.5" lengthAdjust="spacingAndGlyphs">5</text><path d="M543.5 690 V800" stroke="#707070" stroke-width="1" stroke-dasharray="1 2"/><text x="543.0" y="813" font-size="12" text-anchor="middle" fill="#000" textLength="5.5" lengthAdjust="spacingAndGlyphs">6</text><path d="M557.5 690 V800" stroke="#707070" stroke-width="1" stroke-dasharray="1 2"/><text x="557.0" y="813" font-size="12" text-anchor="middle" fill="#000" textLength="5.5" lengthAdjust="spacingAndGlyphs">7</text><path d="M571.5 690 V800" stroke="#707070" stroke-width="1" stroke-dasharray="1 2"/><text x="571.0" y="813" font-size="12" text-anchor="middle" fill="#000" textLength="5.5" lengthAdjust="spacingAndGlyphs">8</text><path d="M585.5 690 V800" stroke="#707070" stroke-width="1" stroke-dasharray="1 2"/><text x="585.0" y="813" font-size="12" text-anchor="middle" fill="#000" textLength="5.5" lengthAdjust="spacingAndGlyphs">9</text><path d="M599.5 690 V800" stroke="#707070" stroke-width="1" stroke-dasharray="1 2"/><text x="599.0" y="813" font-size="12" text-anchor="middle" fill="#000" textLength="11" lengthAdjust="spacingAndGlyphs">10</text><path d="M613.5 690 V800" stroke="#707070" stroke-width="1" stroke-dasharray="1 2"/><text x="613.0" y="813" font-size="12" text-anchor="middle" fill="#000" textLength="11" lengthAdjust="spacingAndGlyphs">11</text><path d="M627.5 690 V800" stroke="#707070" stroke-width="1" stroke-dasharray="1 2"/><text x="627.0" y="813" font-size="12" text-anchor="middle" fill="#000" textLength="11" lengthAdjust="spacingAndGlyphs">12</text><path d="M641.5 690 V800" stroke="#707070" stroke-width="1" stroke-dasharray="1 2"/><text x="641.0" y="813" font-size="12" text-anchor="middle" fill="#000" textLength="11" lengthAdjust="spacingAndGlyphs">13</text><path d="M655.5 690 V800" stroke="#707070" stroke-width="1" stroke-dasharray="1 2"/><text x="655.0" y="813" font-size="12" text-anchor="middle" fill="#000" textLength="11" lengthAdjust="spacingAndGlyphs">14</text><path d="M669.5 690 V800" stroke="#707070" stroke-width="1" stroke-dasharray="1 2"/><text x="669.0" y="813" font-size="12" text-anchor="middle" fill="#000" textLength="11" lengthAdjust="spacingAndGlyphs">15</text><path d="M683.5 690 V800" stroke="#707070" stroke-width="1" stroke-dasharray="1 2"/><text x="683.0" y="813" font-size="12" text-anchor="middle" fill="#000" textLength="11" lengthAdjust="spacingAndGlyphs">16</text><path d="M697.5 690 V800" stroke="#707070" stroke-width="1" stroke-dasharray="1 2"/><text x="697.0" y="813" font-size="12" text-anchor="middle" fill="#000" textLength="11" lengthAdjust="spacingAndGlyphs">17</text><path d="M711.5 690 V800" stroke="#707070" stroke-width="1" stroke-dasharray="1 2"/><text x="711.0" y="813" font-size="12" text-anchor="middle" fill="#000" textLength="11" lengthAdjust="spacingAndGlyphs">18</text><path d="M725.5 690 V800" stroke="#707070" stroke-width="1" stroke-dasharray="1 2"/><text x="725.0" y="813" font-size="12" text-anchor="middle" fill="#000" textLength="11" lengthAdjust="spacingAndGlyphs">19</text><path d="M738.5 690 V800" stroke="#707070" stroke-width="1" stroke-dasharray="1 2"/><text x="738.0" y="813" font-size="12" text-anchor="middle" fill="#000" textLength="11" lengthAdjust="spacingAndGlyphs">20</text><path d="M752.5 690 V800" stroke="#707070" stroke-width="1" stroke-dasharray="1 2"/><text x="752.0" y="813" font-size="12" text-anchor="middle" fill="#000" textLength="11" lengthAdjust="spacingAndGlyphs">21</text><path d="M766.5 690 V800" stroke="#707070" stroke-width="1" stroke-dasharray="1 2"/><text x="766.0" y="813" font-size="12" text-anchor="middle" fill="#000" textLength="11" lengthAdjust="spacingAndGlyphs">22</text><path d="M780.5 690 V800" stroke="#707070" stroke-width="1" stroke-dasharray="1 2"/><text x="780.0" y="813" font-size="12" text-anchor="middle" fill="#000" textLength="11" lengthAdjust="spacingAndGlyphs">23</text><path d="M794.5 690 V800" stroke="#707070" stroke-width="1" stroke-dasharray="1 2"/><text x="794.0" y="813" font-size="12" text-anchor="middle" fill="#000" textLength="11" lengthAdjust="spacingAndGlyphs">24</text><path d="M808.5 690 V800" stroke="#707070" stroke-width="1" stroke-dasharray="1 2"/><text x="808.0" y="813" font-size="12" text-anchor="middle" fill="#000" textLength="11" lengthAdjust="spacingAndGlyphs">25</text><path d="M822.5 690 V800" stroke="#707070" stroke-width="1" stroke-dasharray="1 2"/><text x="822.0" y="813" font-size="12" text-anchor="middle" fill="#000" textLength="11" lengthAdjust="spacingAndGlyphs">26</text><path d="M836.5 690 V800" stroke="#707070" stroke-width="1" stroke-dasharray="1 2"/><text x="836.0" y="813" font-size="12" text-anchor="middle" fill="#000" textLength="11" lengthAdjust="spacingAndGlyphs">27</text><path d="M850.5 690 V800" stroke="#707070" stroke-width="1" stroke-dasharray="1 2"/><text x="850.0" y="813" font-size="12" text-anchor="middle" fill="#000" textLength="11" lengthAdjust="spacingAndGlyphs">28</text><path d="M864.5 690 V800" stroke="#707070" stroke-width="1" stroke-dasharray="1 2"/><text x="864.0" y="813" font-size="12" text-anchor="middle" fill="#000" textLength="11" lengthAdjust="spacingAndGlyphs">29</text><path d="M878.5 690 V800" stroke="#707070" stroke-width="1" stroke-dasharray="1 2"/><text x="878.0" y="813" font-size="12" text-anchor="middle" fill="#000" textLength="11" lengthAdjust="spacingAndGlyphs">30</text><path d="M892.5 690 V800" stroke="#707070" stroke-width="1" stroke-dasharray="1 2"/><text x="892.0" y="813" font-size="12" text-anchor="middle" fill="#000" textLength="11" lengthAdjust="spacingAndGlyphs">31</text><path d="M906.5 690 V800" stroke="#707070" stroke-width="1" stroke-dasharray="1 2"/><text x="906.0" y="813" font-size="12" text-anchor="middle" fill="#000" textLength="11" lengthAdjust="spacingAndGlyphs">32</text><path d="M920.5 690 V800" stroke="#707070" stroke-width="1" stroke-dasharray="1 2"/><text x="920.0" y="813" font-size="12" text-anchor="middle" fill="#000" textLength="11" lengthAdjust="spacingAndGlyphs">33</text><path d="M934.5 690 V800" stroke="#707070" stroke-width="1" stroke-dasharray="1 2"/><text x="934.0" y="813" font-size="12" text-anchor="middle" fill="#000" textLength="11" lengthAdjust="spacingAndGlyphs">34</text><path d="M948.5 690 V800" stroke="#707070" stroke-width="1" stroke-dasharray="1 2"/><text x="948.0" y="813" font-size="12" text-anchor="middle" fill="#000" textLength="11" lengthAdjust="spacingAndGlyphs">35</text><path d="M962.5 690 V800" stroke="#707070" stroke-width="1" stroke-dasharray="1 2"/><text x="962.0" y="813" font-size="12" text-anchor="middle" fill="#000" textLength="11" lengthAdjust="spacingAndGlyphs">36</text><rect x="449.5" y="689.5" width="523.0" height="111.0" fill="none" stroke="#000" stroke-width="1"/><clipPath id="cp"><rect x="449.5" y="687.5" width="523.0" height="115.0"/></clipPath><g clip-path="url(#cp)"><polyline points="459.0,774.4 473.0,750.9 486.9,703.8 500.9,750.9 514.9,774.4 528.9,762.7 542.9,727.3 556.8,750.9 570.8,786.2 584.8,786.2 598.8,798.0 612.7,774.4 626.7,715.5 640.7,762.7 654.6,739.1 668.6,762.7 682.6,739.1 696.6,703.8 710.5,762.7 724.5,762.7 738.5,739.1 752.5,703.8 766.5,762.7 780.4,750.9 794.4,774.4 808.4,727.3 822.3,786.2 836.3,750.9 850.3,798.0 864.3,750.9 878.2,798.0 892.2,762.7 906.2,739.1 920.2,692.0 934.1,774.4 948.1,762.7 962.1,727.3" fill="none" stroke="#8000ff" stroke-width="1"/><path d="M459.0 772.4 L461.0 774.4 L459.0 776.4 L457.0 774.4 Z" fill="#fff" stroke="#202020" stroke-width="0.7"/><path d="M473.0 748.9 L475.0 750.9 L473.0 752.9 L471.0 750.9 Z" fill="#fff" stroke="#202020" stroke-width="0.7"/><path d="M486.9 701.8 L488.9 703.8 L486.9 705.8 L484.9 703.8 Z" fill="#fff" stroke="#202020" stroke-width="0.7"/><path d="M500.9 748.9 L502.9 750.9 L500.9 752.9 L498.9 750.9 Z" fill="#fff" stroke="#202020" stroke-width="0.7"/><path d="M514.9 772.4 L516.9 774.4 L514.9 776.4 L512.9 774.4 Z" fill="#fff" stroke="#202020" stroke-width="0.7"/><path d="M528.9 760.7 L530.9 762.7 L528.9 764.7 L526.9 762.7 Z" fill="#fff" stroke="#202020" stroke-width="0.7"/><path d="M542.9 725.3 L544.9 727.3 L542.9 729.3 L540.9 727.3 Z" fill="#fff" stroke="#202020" stroke-width="0.7"/><path d="M556.8 748.9 L558.8 750.9 L556.8 752.9 L554.8 750.9 Z" fill="#fff" stroke="#202020" stroke-width="0.7"/><path d="M570.8 784.2 L572.8 786.2 L570.8 788.2 L568.8 786.2 Z" fill="#fff" stroke="#202020" stroke-width="0.7"/><path d="M584.8 784.2 L586.8 786.2 L584.8 788.2 L582.8 786.2 Z" fill="#fff" stroke="#202020" stroke-width="0.7"/><path d="M598.8 796.0 L600.8 798.0 L598.8 800.0 L596.8 798.0 Z" fill="#fff" stroke="#202020" stroke-width="0.7"/><path d="M612.7 772.4 L614.7 774.4 L612.7 776.4 L610.7 774.4 Z" fill="#fff" stroke="#202020" stroke-width="0.7"/><path d="M626.7 713.5 L628.7 715.5 L626.7 717.5 L624.7 715.5 Z" fill="#fff" stroke="#202020" stroke-width="0.7"/><path d="M640.7 760.7 L642.7 762.7 L640.7 764.7 L638.7 762.7 Z" fill="#fff" stroke="#202020" stroke-width="0.7"/><path d="M654.6 737.1 L656.6 739.1 L654.6 741.1 L652.6 739.1 Z" fill="#fff" stroke="#202020" stroke-width="0.7"/><path d="M668.6 760.7 L670.6 762.7 L668.6 764.7 L666.6 762.7 Z" fill="#fff" stroke="#202020" stroke-width="0.7"/><path d="M682.6 737.1 L684.6 739.1 L682.6 741.1 L680.6 739.1 Z" fill="#fff" stroke="#202020" stroke-width="0.7"/><path d="M696.6 701.8 L698.6 703.8 L696.6 705.8 L694.6 703.8 Z" fill="#fff" stroke="#202020" stroke-width="0.7"/><path d="M710.5 760.7 L712.5 762.7 L710.5 764.7 L708.5 762.7 Z" fill="#fff" stroke="#202020" stroke-width="0.7"/><path d="M724.5 760.7 L726.5 762.7 L724.5 764.7 L722.5 762.7 Z" fill="#fff" stroke="#202020" stroke-width="0.7"/><path d="M738.5 737.1 L740.5 739.1 L738.5 741.1 L736.5 739.1 Z" fill="#fff" stroke="#202020" stroke-width="0.7"/><path d="M752.5 701.8 L754.5 703.8 L752.5 705.8 L750.5 703.8 Z" fill="#fff" stroke="#202020" stroke-width="0.7"/><path d="M766.5 760.7 L768.5 762.7 L766.5 764.7 L764.5 762.7 Z" fill="#fff" stroke="#202020" stroke-width="0.7"/><path d="M780.4 748.9 L782.4 750.9 L780.4 752.9 L778.4 750.9 Z" fill="#fff" stroke="#202020" stroke-width="0.7"/><path d="M794.4 772.4 L796.4 774.4 L794.4 776.4 L792.4 774.4 Z" fill="#fff" stroke="#202020" stroke-width="0.7"/><path d="M808.4 725.3 L810.4 727.3 L808.4 729.3 L806.4 727.3 Z" fill="#fff" stroke="#202020" stroke-width="0.7"/><path d="M822.3 784.2 L824.3 786.2 L822.3 788.2 L820.3 786.2 Z" fill="#fff" stroke="#202020" stroke-width="0.7"/><path d="M836.3 748.9 L838.3 750.9 L836.3 752.9 L834.3 750.9 Z" fill="#fff" stroke="#202020" stroke-width="0.7"/><path d="M850.3 796.0 L852.3 798.0 L850.3 800.0 L848.3 798.0 Z" fill="#fff" stroke="#202020" stroke-width="0.7"/><path d="M864.3 748.9 L866.3 750.9 L864.3 752.9 L862.3 750.9 Z" fill="#fff" stroke="#202020" stroke-width="0.7"/><path d="M878.2 796.0 L880.2 798.0 L878.2 800.0 L876.2 798.0 Z" fill="#fff" stroke="#202020" stroke-width="0.7"/><path d="M892.2 760.7 L894.2 762.7 L892.2 764.7 L890.2 762.7 Z" fill="#fff" stroke="#202020" stroke-width="0.7"/><path d="M906.2 737.1 L908.2 739.1 L906.2 741.1 L904.2 739.1 Z" fill="#fff" stroke="#202020" stroke-width="0.7"/><path d="M920.2 690.0 L922.2 692.0 L920.2 694.0 L918.2 692.0 Z" fill="#fff" stroke="#202020" stroke-width="0.7"/><path d="M934.1 772.4 L936.1 774.4 L934.1 776.4 L932.1 774.4 Z" fill="#fff" stroke="#202020" stroke-width="0.7"/><path d="M948.1 760.7 L950.1 762.7 L948.1 764.7 L946.1 762.7 Z" fill="#fff" stroke="#202020" stroke-width="0.7"/><path d="M962.1 725.3 L964.1 727.3 L962.1 729.3 L960.1 727.3 Z" fill="#fff" stroke="#202020" stroke-width="0.7"/><rect x="453.5" y="761.5" width="12" height="11" fill="#00ccf0" stroke="#000" stroke-width="1"/><text x="459.0" y="770.5" font-size="9" text-anchor="middle" fill="#000">4</text><rect x="467.5" y="737.5" width="12" height="11" fill="#00ccf0" stroke="#000" stroke-width="1"/><text x="473.0" y="746.5" font-size="9" text-anchor="middle" fill="#000">6</text><rect x="479.5" y="690.5" width="16" height="11" fill="#00ccf0" stroke="#000" stroke-width="1"/><text x="486.9" y="699.5" font-size="9" text-anchor="middle" fill="#000">10</text><rect x="495.5" y="737.5" width="12" height="11" fill="#00ccf0" stroke="#000" stroke-width="1"/><text x="500.9" y="746.5" font-size="9" text-anchor="middle" fill="#000">6</text><rect x="509.5" y="761.5" width="12" height="11" fill="#00ccf0" stroke="#000" stroke-width="1"/><text x="514.9" y="770.5" font-size="9" text-anchor="middle" fill="#000">4</text><rect x="523.5" y="749.5" width="12" height="11" fill="#00ccf0" stroke="#000" stroke-width="1"/><text x="528.9" y="758.5" font-size="9" text-anchor="middle" fill="#000">5</text><rect x="537.5" y="714.5" width="12" height="11" fill="#00ccf0" stroke="#000" stroke-width="1"/><text x="542.9" y="723.5" font-size="9" text-anchor="middle" fill="#000">8</text><rect x="551.5" y="737.5" width="12" height="11" fill="#00ccf0" stroke="#000" stroke-width="1"/><text x="556.8" y="746.5" font-size="9" text-anchor="middle" fill="#000">6</text><rect x="565.5" y="773.5" width="12" height="11" fill="#00ccf0" stroke="#000" stroke-width="1"/><text x="570.8" y="782.5" font-size="9" text-anchor="middle" fill="#000">3</text><rect x="579.5" y="773.5" width="12" height="11" fill="#00ccf0" stroke="#000" stroke-width="1"/><text x="584.8" y="782.5" font-size="9" text-anchor="middle" fill="#000">3</text><rect x="593.5" y="785.5" width="12" height="11" fill="#00ccf0" stroke="#000" stroke-width="1"/><text x="598.8" y="794.5" font-size="9" text-anchor="middle" fill="#000">2</text><rect x="607.5" y="761.5" width="12" height="11" fill="#00ccf0" stroke="#000" stroke-width="1"/><text x="612.7" y="770.5" font-size="9" text-anchor="middle" fill="#000">4</text><rect x="621.5" y="702.5" width="12" height="11" fill="#00ccf0" stroke="#000" stroke-width="1"/><text x="626.7" y="711.5" font-size="9" text-anchor="middle" fill="#000">9</text><rect x="635.5" y="749.5" width="12" height="11" fill="#00ccf0" stroke="#000" stroke-width="1"/><text x="640.7" y="758.5" font-size="9" text-anchor="middle" fill="#000">5</text><rect x="649.5" y="726.5" width="12" height="11" fill="#00ccf0" stroke="#000" stroke-width="1"/><text x="654.6" y="735.5" font-size="9" text-anchor="middle" fill="#000">7</text><rect x="663.5" y="749.5" width="12" height="11" fill="#00ccf0" stroke="#000" stroke-width="1"/><text x="668.6" y="758.5" font-size="9" text-anchor="middle" fill="#000">5</text><rect x="677.5" y="726.5" width="12" height="11" fill="#00ccf0" stroke="#000" stroke-width="1"/><text x="682.6" y="735.5" font-size="9" text-anchor="middle" fill="#000">7</text><rect x="689.5" y="690.5" width="16" height="11" fill="#00ccf0" stroke="#000" stroke-width="1"/><text x="696.6" y="699.5" font-size="9" text-anchor="middle" fill="#000">10</text><rect x="705.5" y="749.5" width="12" height="11" fill="#00ccf0" stroke="#000" stroke-width="1"/><text x="710.5" y="758.5" font-size="9" text-anchor="middle" fill="#000">5</text><rect x="719.5" y="749.5" width="12" height="11" fill="#00ccf0" stroke="#000" stroke-width="1"/><text x="724.5" y="758.5" font-size="9" text-anchor="middle" fill="#000">5</text><rect x="732.5" y="726.5" width="12" height="11" fill="#00ccf0" stroke="#000" stroke-width="1"/><text x="738.5" y="735.5" font-size="9" text-anchor="middle" fill="#000">7</text><rect x="744.5" y="690.5" width="16" height="11" fill="#00ccf0" stroke="#000" stroke-width="1"/><text x="752.5" y="699.5" font-size="9" text-anchor="middle" fill="#000">10</text><rect x="760.5" y="749.5" width="12" height="11" fill="#00ccf0" stroke="#000" stroke-width="1"/><text x="766.5" y="758.5" font-size="9" text-anchor="middle" fill="#000">5</text><rect x="774.5" y="737.5" width="12" height="11" fill="#00ccf0" stroke="#000" stroke-width="1"/><text x="780.4" y="746.5" font-size="9" text-anchor="middle" fill="#000">6</text><rect x="788.5" y="761.5" width="12" height="11" fill="#00ccf0" stroke="#000" stroke-width="1"/><text x="794.4" y="770.5" font-size="9" text-anchor="middle" fill="#000">4</text><rect x="802.5" y="714.5" width="12" height="11" fill="#00ccf0" stroke="#000" stroke-width="1"/><text x="808.4" y="723.5" font-size="9" text-anchor="middle" fill="#000">8</text><rect x="816.5" y="773.5" width="12" height="11" fill="#00ccf0" stroke="#000" stroke-width="1"/><text x="822.3" y="782.5" font-size="9" text-anchor="middle" fill="#000">3</text><rect x="830.5" y="737.5" width="12" height="11" fill="#00ccf0" stroke="#000" stroke-width="1"/><text x="836.3" y="746.5" font-size="9" text-anchor="middle" fill="#000">6</text><rect x="844.5" y="785.5" width="12" height="11" fill="#00ccf0" stroke="#000" stroke-width="1"/><text x="850.3" y="794.5" font-size="9" text-anchor="middle" fill="#000">2</text><rect x="858.5" y="737.5" width="12" height="11" fill="#00ccf0" stroke="#000" stroke-width="1"/><text x="864.3" y="746.5" font-size="9" text-anchor="middle" fill="#000">6</text><rect x="872.5" y="785.5" width="12" height="11" fill="#00ccf0" stroke="#000" stroke-width="1"/><text x="878.2" y="794.5" font-size="9" text-anchor="middle" fill="#000">2</text><rect x="886.5" y="749.5" width="12" height="11" fill="#00ccf0" stroke="#000" stroke-width="1"/><text x="892.2" y="758.5" font-size="9" text-anchor="middle" fill="#000">5</text><rect x="900.5" y="726.5" width="12" height="11" fill="#00ccf0" stroke="#000" stroke-width="1"/><text x="906.2" y="735.5" font-size="9" text-anchor="middle" fill="#000">7</text><rect x="912.5" y="678.5" width="16" height="11" fill="#00ccf0" stroke="#000" stroke-width="1"/><text x="920.2" y="687.5" font-size="9" text-anchor="middle" fill="#000">11</text><rect x="928.5" y="761.5" width="12" height="11" fill="#00ccf0" stroke="#000" stroke-width="1"/><text x="934.1" y="770.5" font-size="9" text-anchor="middle" fill="#000">4</text><rect x="942.5" y="749.5" width="12" height="11" fill="#00ccf0" stroke="#000" stroke-width="1"/><text x="948.1" y="758.5" font-size="9" text-anchor="middle" fill="#000">5</text><rect x="956.5" y="714.5" width="12" height="11" fill="#00ccf0" stroke="#000" stroke-width="1"/><text x="962.1" y="723.5" font-size="9" text-anchor="middle" fill="#000">8</text></g></svg>
<div style="left:8px;top:822px;width:976px;height:2px;background:linear-gradient(#9a9a9a,#d8d8d8)"></div>
<div style="left:8px;top:824px;width:976px;height:28px;background:#f0eded"></div>
<span class="t" style="left:13.75px;top:833.09px;font-size:12px;line-height:12px;transform:scaleX(0.979);transform-origin:0 0;">Нажмите Ввод/Enter</span>
<div style="left:706px;top:826px;width:1px;height:24px;background:#d0d0d0;box-shadow:1px 0 0 #fff"></div>
<span class="t" style="left:712.5px;top:833.09px;font-size:12px;line-height:12px;transform:scaleX(0.973);transform-origin:0 0;">Автосмещение : 30</span>
<div style="left:827px;top:826px;width:1px;height:24px;background:#d0d0d0;box-shadow:1px 0 0 #fff"></div>
<span class="t" style="left:832px;top:833.09px;font-size:12px;line-height:12px;transform:scaleX(0.947);transform-origin:0 0;">Исходное: 29</span>
<svg style="position:absolute;left:972px;top:840px" width="11" height="11"><rect x="8" y="0" width="2" height="2" fill="#b8b8b8"/><rect x="4" y="4" width="2" height="2" fill="#b8b8b8"/><rect x="8" y="4" width="2" height="2" fill="#b8b8b8"/><rect x="0" y="8" width="2" height="2" fill="#b8b8b8"/><rect x="4" y="8" width="2" height="2" fill="#b8b8b8"/><rect x="8" y="8" width="2" height="2" fill="#b8b8b8"/></svg>
</body></html>
